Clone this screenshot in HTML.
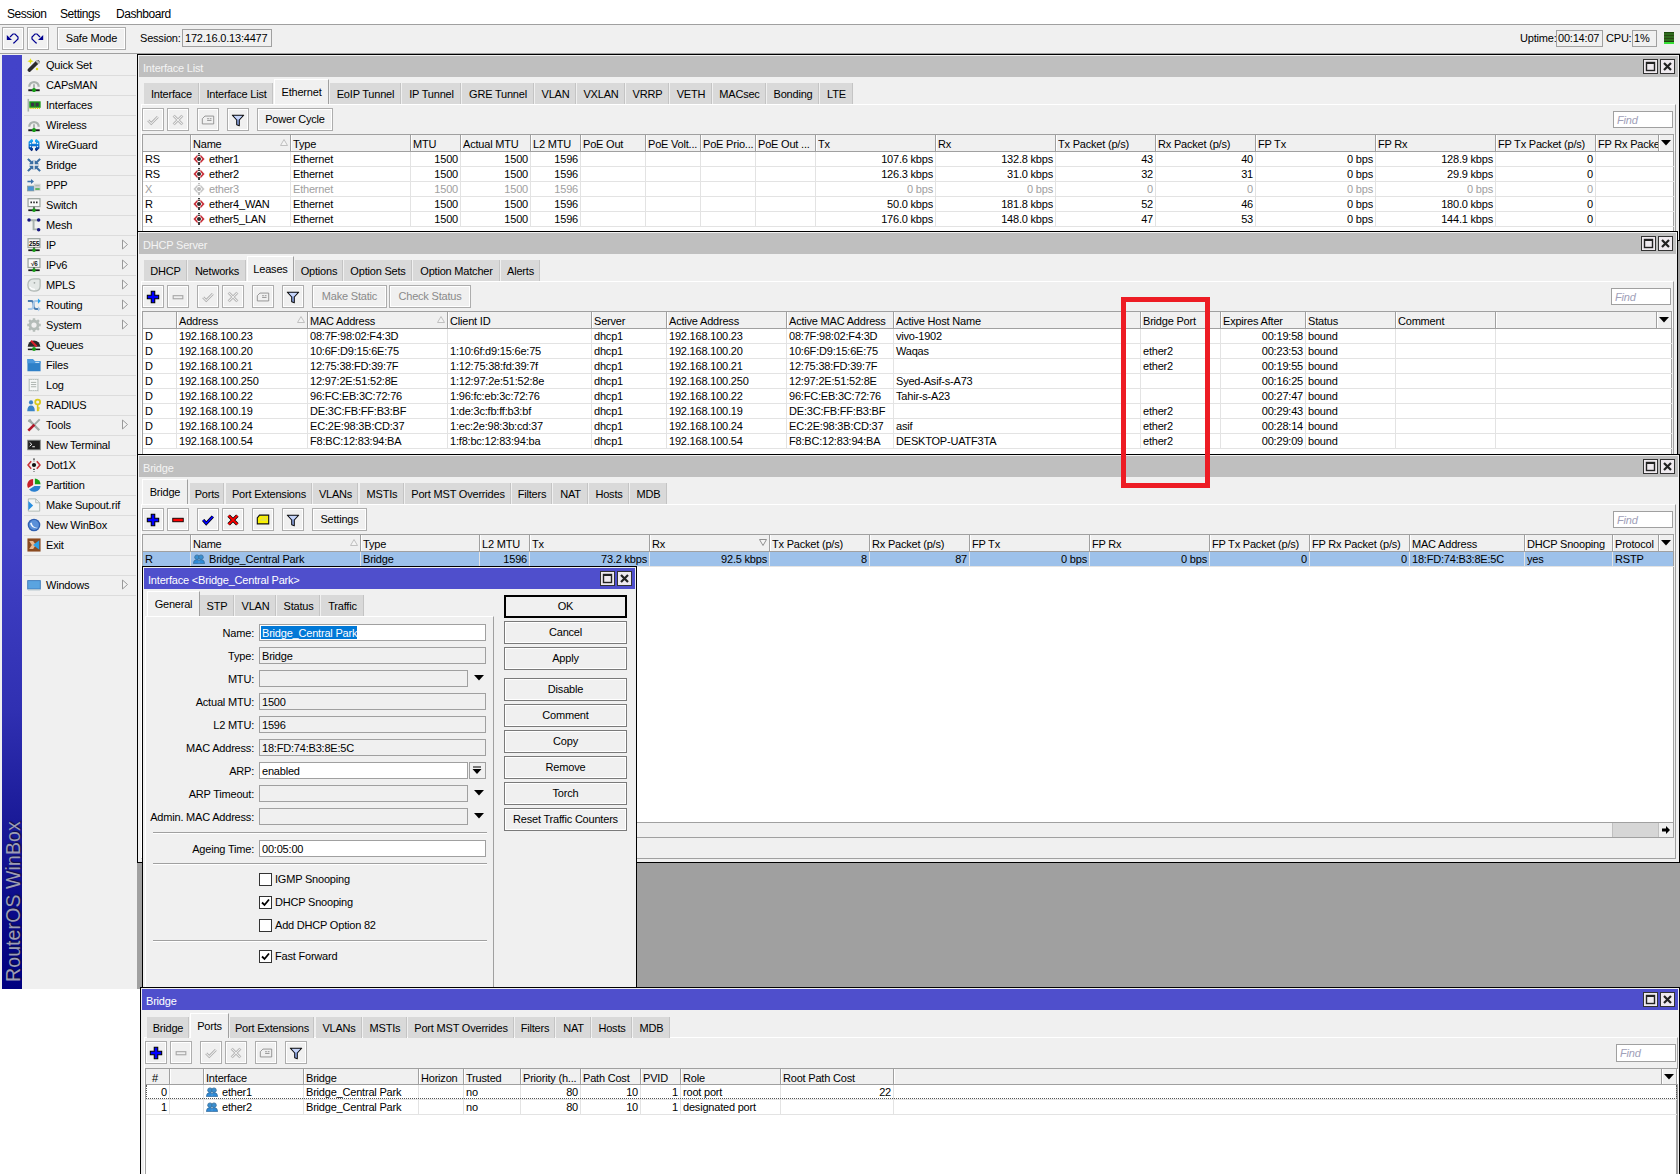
<!DOCTYPE html><html><head><meta charset="utf-8"><style>*{margin:0;padding:0;box-sizing:border-box}
html,body{width:1680px;height:1174px;overflow:hidden}
body{position:relative;background:#fff;font-family:"Liberation Sans",sans-serif;font-size:11px;letter-spacing:-0.2px;color:#000}
body>div{position:absolute}
.t{white-space:nowrap;line-height:15px;height:15px}
</style></head><body><div style="left:0px;top:0px;width:1680px;height:24px;background:#fff;"></div>
<div class="t" style="left:7px;top:7px;font-size:12px;letter-spacing:-0.45px;">Session</div>
<div class="t" style="left:60px;top:7px;font-size:12px;letter-spacing:-0.45px;">Settings</div>
<div class="t" style="left:116px;top:7px;font-size:12px;letter-spacing:-0.45px;">Dashboard</div>
<div style="left:0px;top:24px;width:1680px;height:1px;background:#a0a0a0;"></div>
<div style="left:0px;top:25px;width:1680px;height:28px;background:#f0f0f0;"></div>
<div style="left:2px;top:27px;width:22px;height:23px;border:1px solid #adadad;background:#f0f0f0;border-width:1px;box-shadow:inset 0 0 0 1px #fff;"></div>
<svg style="position:absolute;left:5px;top:30px;" width="16" height="16" viewBox="0 0 16 16"><path d="M1.8 5 L1.8 10 L7 10 Z" fill="#000090"/><path d="M5 7 L8 4 L10 4 L13 7 L13 9 L9 13 L8 13" fill="none" stroke="#000090" stroke-width="1.2"/></svg>
<div style="left:27px;top:27px;width:22px;height:23px;border:1px solid #adadad;background:#f0f0f0;border-width:1px;box-shadow:inset 0 0 0 1px #fff;"></div>
<svg style="position:absolute;left:30px;top:30px;" width="16" height="16" viewBox="0 0 16 16"><path d="M13.2 5 L13.2 10 L8 10 Z" fill="#000090"/><path d="M10 7 L7 4 L5 4 L2 7 L2 9 L6 13 L7 13" fill="none" stroke="#000090" stroke-width="1.2"/></svg>
<div style="left:57px;top:27px;width:69px;height:23px;border:1px solid #adadad;background:#f0f0f0;border-width:1px;box-shadow:inset 0 0 0 1px #fff;"></div>
<div class="t" style="left:57px;width:69px;top:31px;text-align:center;">Safe Mode</div>
<div class="t" style="left:140px;top:31px;">Session:</div>
<div style="left:182px;top:29px;width:90px;height:18px;border:1px solid #a0a0a0;background:#f0f0f0;"></div>
<div class="t" style="left:185px;top:31px;">172.16.0.13:4477</div>
<div class="t" style="left:1520px;top:31px;">Uptime:</div>
<div style="left:1556px;top:30px;width:47px;height:17px;border:1px solid #a0a0a0;background:#f0f0f0;"></div>
<div class="t" style="left:1558px;top:31px;">00:14:07</div>
<div class="t" style="left:1606px;top:31px;">CPU:</div>
<div style="left:1632px;top:30px;width:25px;height:17px;border:1px solid #a0a0a0;background:#f0f0f0;"></div>
<div class="t" style="left:1634px;top:31px;">1%</div>
<div style="left:1664px;top:32px;width:10px;height:12px;background:linear-gradient(#1c4a0c 0 1px,#2f6c1e 1px 3px,#2a4a14 3px 4px,#2f6c1e 4px 6px,#2a4a14 6px 7px,#2f6c1e 7px 9px,#22400e 9px 10px,#36e036 10px 12px);"></div>
<div style="left:0px;top:53px;width:1680px;height:1px;background:#a0a0a0;"></div>
<div style="left:0px;top:54px;width:137px;height:935px;background:#f0f0f0;"></div>
<div style="left:2px;top:55px;width:20px;height:934px;background:linear-gradient(#4343c9 0%,#4141c6 52%,#3030b2 70%,#1a1a98 82%,#0a0a88 92%,#000080 100%);"></div>
<div style="left:-67px;top:892px;width:160px;height:20px;transform:rotate(-90deg);font-size:19.5px;line-height:20px;letter-spacing:0.1px;color:#9c9cb4;white-space:nowrap;text-shadow:1px 1px 1px #101040;">RouterOS WinBox</div>
<div class="t" style="left:46px;top:58px;">Quick Set</div>
<svg style="position:absolute;left:27px;top:58px;" width="14" height="14" viewBox="0 0 16 16"><path d="M2.8 13.8 L12.2 4.4" stroke="#2b2b2b" stroke-width="4.2" stroke-linecap="round"/><path d="M11.3 3.6 L13.3 5.6" stroke="#bdbdbd" stroke-width="2.6" stroke-linecap="round"/><path d="M4 0.3 L5 2.7 L7.6 3.6 L5 4.6 L4 7 L3 4.6 L0.4 3.6 L3 2.7 Z" fill="#e2df14"/><circle cx="11.5" cy="12.6" r="1.4" fill="#e2df14"/></svg>
<div style="left:24px;top:75px;width:112px;height:1px;background:#dcdcdc;"></div>
<div class="t" style="left:46px;top:78px;">CAPsMAN</div>
<svg style="position:absolute;left:27px;top:78px;" width="14" height="14" viewBox="0 0 16 16"><path d="M2.6 10 A5.4 5.4 0 0 1 13.4 10" fill="none" stroke="#aab2ae" stroke-width="2.6"/><path d="M8 7 V13" stroke="#9aa39e" stroke-width="1.8"/><path d="M1.5 14 H14.5" stroke="#1a1a1a" stroke-width="2.2"/><circle cx="8" cy="13.8" r="2.3" fill="#16a016"/></svg>
<div style="left:24px;top:95px;width:112px;height:1px;background:#dcdcdc;"></div>
<div class="t" style="left:46px;top:98px;">Interfaces</div>
<svg style="position:absolute;left:27px;top:98px;" width="14" height="14" viewBox="0 0 16 16"><rect x="0.6" y="1" width="1.8" height="14.5" fill="#a8b4ae"/><rect x="2.6" y="3.8" width="13" height="7.4" fill="#189818"/><rect x="4.6" y="5.4" width="3.6" height="4.2" fill="#3a3446"/><rect x="9.8" y="5.4" width="3.6" height="4.2" fill="#3a3446"/><path d="M3 11.8 H15.5" stroke="#d8d400" stroke-width="1.4" stroke-dasharray="1.2 0.9"/></svg>
<div style="left:24px;top:115px;width:112px;height:1px;background:#dcdcdc;"></div>
<div class="t" style="left:46px;top:118px;">Wireless</div>
<svg style="position:absolute;left:27px;top:118px;" width="14" height="14" viewBox="0 0 16 16"><path d="M2.6 10 A5.4 5.4 0 0 1 13.4 10" fill="none" stroke="#aab2ae" stroke-width="2.6"/><path d="M8 7 V13" stroke="#9aa39e" stroke-width="1.8"/><path d="M1.5 14 H14.5" stroke="#1a1a1a" stroke-width="2.2"/><circle cx="8" cy="13.8" r="2.3" fill="#16a016"/></svg>
<div style="left:24px;top:135px;width:112px;height:1px;background:#dcdcdc;"></div>
<div class="t" style="left:46px;top:138px;">WireGuard</div>
<svg style="position:absolute;left:27px;top:138px;" width="14" height="14" viewBox="0 0 16 16"><defs><linearGradient id="wgg" x1="0" y1="0" x2="0" y2="1"><stop offset="0" stop-color="#22b8ff"/><stop offset="0.55" stop-color="#0a6fd0"/><stop offset="1" stop-color="#001a70"/></linearGradient></defs><path d="M5.2 1 L6.8 2.2 V4.6 H5.8 V6.6 H10.2 V4.6 H9.2 V2.2 L10.8 1 L14.2 4.2 V11.8 L10.8 15 L9.2 13.8 V11.4 H10.2 V9.4 H5.8 V11.4 H6.8 V13.8 L5.2 15 L1.8 11.8 V4.2 Z" fill="url(#wgg)"/><circle cx="4" cy="6.2" r="0.9" fill="#e8f6ff"/><circle cx="12" cy="6.2" r="0.9" fill="#e8f6ff"/><circle cx="4" cy="9.8" r="0.9" fill="#cfe6ff"/><circle cx="12" cy="9.8" r="0.9" fill="#cfe6ff"/></svg>
<div style="left:24px;top:155px;width:112px;height:1px;background:#dcdcdc;"></div>
<div class="t" style="left:46px;top:158px;">Bridge</div>
<svg style="position:absolute;left:27px;top:158px;" width="14" height="14" viewBox="0 0 16 16"><g stroke="#3a6ea2" stroke-width="2.4"><path d="M1 1 L5.8 5.8 M15 1 L10.2 5.8 M1 15 L5.8 10.2 M15 15 L10.2 10.2"/></g><g fill="#3a6ea2"><path d="M7.2 2.2 V7.2 H2.2 Z M8.8 2.2 V7.2 H13.8 Z M7.2 13.8 V8.8 H2.2 Z M8.8 13.8 V8.8 H13.8 Z"/></g></svg>
<div style="left:24px;top:175px;width:112px;height:1px;background:#dcdcdc;"></div>
<div class="t" style="left:46px;top:178px;">PPP</div>
<svg style="position:absolute;left:27px;top:178px;" width="14" height="14" viewBox="0 0 16 16"><path d="M0.5 4 H5.5" stroke="#3a6fa8" stroke-width="1.8"/><path d="M4.6 1.2 L8 4 L4.6 6.8 Z" fill="#3a6fa8"/><rect x="0.5" y="9.2" width="7.5" height="5.6" fill="#4a94d4" stroke="#8a9a96" stroke-width="0.8"/><rect x="8" y="6.6" width="7.5" height="8.2" fill="#d0d4d2"/><path d="M9.5 8.8 H14.5" stroke="#a8aca8" stroke-width="1"/><path d="M9.5 12.6 H14.5" stroke="#16a016" stroke-width="1.4"/></svg>
<div style="left:24px;top:195px;width:112px;height:1px;background:#dcdcdc;"></div>
<div class="t" style="left:46px;top:198px;">Switch</div>
<svg style="position:absolute;left:27px;top:198px;" width="14" height="14" viewBox="0 0 16 16"><rect x="1.2" y="0.8" width="13.6" height="9" fill="#fafafa" stroke="#9aa39e" stroke-width="1.4"/><path d="M4 5 H5.6 M7.2 5 H8.8 M10.4 5 H12" stroke="#111" stroke-width="2"/><path d="M8 10 V13" stroke="#222" stroke-width="1.4"/><path d="M1.5 14 H14.5" stroke="#1a1a1a" stroke-width="2"/><circle cx="8" cy="13.8" r="2.1" fill="#16a016"/></svg>
<div style="left:24px;top:215px;width:112px;height:1px;background:#dcdcdc;"></div>
<div class="t" style="left:46px;top:218px;">Mesh</div>
<svg style="position:absolute;left:27px;top:218px;" width="14" height="14" viewBox="0 0 16 16"><path d="M2.5 2.5 H13 M7.5 2.5 V13 H12.5" stroke="#a8b2ae" stroke-width="2.2" fill="none"/><circle cx="2.3" cy="2.3" r="2" fill="#16167e"/><circle cx="13.3" cy="2.3" r="2" fill="#16167e"/><circle cx="13.3" cy="13.3" r="2" fill="#16167e"/></svg>
<div style="left:24px;top:235px;width:112px;height:1px;background:#dcdcdc;"></div>
<div class="t" style="left:46px;top:238px;">IP</div>
<svg style="position:absolute;left:27px;top:238px;" width="14" height="14" viewBox="0 0 16 16"><rect x="1.2" y="0.8" width="13.6" height="10" fill="#fafafa" stroke="#9aa39e" stroke-width="1.4"/><text x="8" y="8.6" font-size="7.8" font-weight="bold" text-anchor="middle" font-family="Liberation Mono" fill="#111" letter-spacing="-0.6">255</text><path d="M8 10.5 V13" stroke="#222" stroke-width="1.4"/><path d="M1.5 14 H14.5" stroke="#1a1a1a" stroke-width="2"/><circle cx="8" cy="13.8" r="2.1" fill="#16a016"/></svg>
<svg style="position:absolute;left:121px;top:239px;" width="8" height="11" viewBox="0 0 8 11"><path d="M1.5 1 L6.5 5.5 L1.5 10 Z" fill="#f4f4f4" stroke="#9a9a9a" stroke-width="1"/></svg>
<div style="left:24px;top:255px;width:112px;height:1px;background:#dcdcdc;"></div>
<div class="t" style="left:46px;top:258px;">IPv6</div>
<svg style="position:absolute;left:27px;top:258px;" width="14" height="14" viewBox="0 0 16 16"><rect x="1.2" y="0.8" width="13.6" height="10" fill="#fafafa" stroke="#9aa39e" stroke-width="1.4"/><text x="8" y="8.6" font-size="7.4" font-weight="bold" text-anchor="middle" font-family="Liberation Mono" fill="#111" letter-spacing="-0.6">√6</text><path d="M8 10.5 V13" stroke="#222" stroke-width="1.4"/><path d="M1.5 14 H14.5" stroke="#1a1a1a" stroke-width="2"/><circle cx="8" cy="13.8" r="2.1" fill="#16a016"/></svg>
<svg style="position:absolute;left:121px;top:259px;" width="8" height="11" viewBox="0 0 8 11"><path d="M1.5 1 L6.5 5.5 L1.5 10 Z" fill="#f4f4f4" stroke="#9a9a9a" stroke-width="1"/></svg>
<div style="left:24px;top:275px;width:112px;height:1px;background:#dcdcdc;"></div>
<div class="t" style="left:46px;top:278px;">MPLS</div>
<svg style="position:absolute;left:27px;top:278px;" width="14" height="14" viewBox="0 0 16 16"><path d="M8 1 H13.5 Q15 1 15 2.5 V9 Q15 15 8 15 Q1 15 1 8 Q1 1 8 1 Z" fill="#e4e8e6" stroke="#b0b8b4" stroke-width="1.4"/><circle cx="8.5" cy="5.5" r="1" fill="#a0a8a4"/><path d="M3 10 Q5 13 9 13" stroke="#fff" stroke-width="1.4" fill="none"/></svg>
<svg style="position:absolute;left:121px;top:279px;" width="8" height="11" viewBox="0 0 8 11"><path d="M1.5 1 L6.5 5.5 L1.5 10 Z" fill="#f4f4f4" stroke="#9a9a9a" stroke-width="1"/></svg>
<div style="left:24px;top:295px;width:112px;height:1px;background:#dcdcdc;"></div>
<div class="t" style="left:46px;top:298px;">Routing</div>
<svg style="position:absolute;left:27px;top:298px;" width="14" height="14" viewBox="0 0 16 16"><path d="M1 3.5 H5 Q7.5 3.5 7.5 8 Q7.5 12.5 10 12.5 H13" stroke="#4a7cb0" stroke-width="2.2" fill="none"/><path d="M1 12.5 H5 Q7.5 12.5 7.5 8 Q7.5 3.5 10 3.5 H13" stroke="#a8c8e8" stroke-width="2.2" fill="none"/><path d="M12.5 0.5 L15.8 3.5 L12.5 6.5 Z" fill="#2aa0e8"/><path d="M12.5 9.5 L15.8 12.5 L12.5 15.5 Z" fill="#a8c8e8"/></svg>
<svg style="position:absolute;left:121px;top:299px;" width="8" height="11" viewBox="0 0 8 11"><path d="M1.5 1 L6.5 5.5 L1.5 10 Z" fill="#f4f4f4" stroke="#9a9a9a" stroke-width="1"/></svg>
<div style="left:24px;top:315px;width:112px;height:1px;background:#dcdcdc;"></div>
<div class="t" style="left:46px;top:318px;">System</div>
<svg style="position:absolute;left:27px;top:318px;" width="14" height="14" viewBox="0 0 16 16"><circle cx="8" cy="8" r="4.6" fill="none" stroke="#b4bcb8" stroke-width="3.2"/><g stroke="#b4bcb8" stroke-width="2.8"><path d="M8 0.3 V3.5 M8 12.5 V15.7 M0.3 8 H3.5 M12.5 8 H15.7 M2.4 2.4 L4.6 4.6 M11.4 11.4 L13.6 13.6 M13.6 2.4 L11.4 4.6 M4.6 11.4 L2.4 13.6"/></g></svg>
<svg style="position:absolute;left:121px;top:319px;" width="8" height="11" viewBox="0 0 8 11"><path d="M1.5 1 L6.5 5.5 L1.5 10 Z" fill="#f4f4f4" stroke="#9a9a9a" stroke-width="1"/></svg>
<div style="left:24px;top:335px;width:112px;height:1px;background:#dcdcdc;"></div>
<div class="t" style="left:46px;top:338px;">Queues</div>
<svg style="position:absolute;left:27px;top:338px;" width="14" height="14" viewBox="0 0 16 16"><path d="M0.8 10 A7.2 7.2 0 0 1 15.2 10 Z" fill="#2a2a2a"/><path d="M4.6 3.2 L11 9.6" stroke="#d8202a" stroke-width="2.4"/><path d="M1 13 H15" stroke="#1a1a1a" stroke-width="1.8"/><circle cx="8" cy="12.6" r="2.2" fill="#16a016"/></svg>
<div style="left:24px;top:355px;width:112px;height:1px;background:#dcdcdc;"></div>
<div class="t" style="left:46px;top:358px;">Files</div>
<svg style="position:absolute;left:27px;top:358px;" width="14" height="14" viewBox="0 0 16 16"><path d="M0.5 1 H6.5 L9 3.8 H15.5 V15.2 H0.5 Z" fill="#2f80c8"/><path d="M0.5 1 H6.5 L9 3.8 H15.5 V6 H0.5 Z" fill="#4a98dc"/><path d="M9.5 5 H14" stroke="#e8f0f8" stroke-width="1"/></svg>
<div style="left:24px;top:375px;width:112px;height:1px;background:#dcdcdc;"></div>
<div class="t" style="left:46px;top:378px;">Log</div>
<svg style="position:absolute;left:27px;top:378px;" width="14" height="14" viewBox="0 0 16 16"><path d="M2.5 1 L3.5 2 L4.5 1 L5.5 2 L6.5 1 L7.5 2 L8.5 1 L9.5 2 L10.5 1 L11.5 2 L12.5 1 V15 L11.5 14 L10.5 15 L9.5 14 L8.5 15 L7.5 14 L6.5 15 L5.5 14 L4.5 15 L3.5 14 L2.5 15 Z" fill="#f6f8f7" stroke="#a8b2ae" stroke-width="1"/><path d="M4.5 5 H10.5 M4.5 7.5 H10.5 M4.5 10 H10.5" stroke="#a0a8a4" stroke-width="1"/></svg>
<div style="left:24px;top:395px;width:112px;height:1px;background:#dcdcdc;"></div>
<div class="t" style="left:46px;top:398px;">RADIUS</div>
<svg style="position:absolute;left:27px;top:398px;" width="14" height="14" viewBox="0 0 16 16"><circle cx="4.6" cy="5" r="2.4" fill="#3a84c8"/><path d="M0.3 15 Q0.3 8.6 4.6 8.6 Q8.9 8.6 8.9 15 Z" fill="#3a84c8"/><circle cx="12.2" cy="4.6" r="2.8" fill="none" stroke="#d8c818" stroke-width="2"/><path d="M12.2 7.2 V15 M12.2 11.5 H14.5 M12.2 13.8 H14" stroke="#d8c818" stroke-width="1.8"/></svg>
<div style="left:24px;top:415px;width:112px;height:1px;background:#dcdcdc;"></div>
<div class="t" style="left:46px;top:418px;">Tools</div>
<svg style="position:absolute;left:27px;top:418px;" width="14" height="14" viewBox="0 0 16 16"><path d="M3 3 L14 14" stroke="#a0aaa6" stroke-width="2.6"/><path d="M1 4 A3 3 0 0 1 4 1 L5 3 L3 5 Z" fill="#a0aaa6"/><path d="M14.5 1.5 L8.5 7.5" stroke="#a0aaa6" stroke-width="2.2"/><path d="M8.5 7.5 L1.5 14.5" stroke="#b01828" stroke-width="3"/></svg>
<svg style="position:absolute;left:121px;top:419px;" width="8" height="11" viewBox="0 0 8 11"><path d="M1.5 1 L6.5 5.5 L1.5 10 Z" fill="#f4f4f4" stroke="#9a9a9a" stroke-width="1"/></svg>
<div style="left:24px;top:435px;width:112px;height:1px;background:#dcdcdc;"></div>
<div class="t" style="left:46px;top:438px;">New Terminal</div>
<svg style="position:absolute;left:27px;top:438px;" width="14" height="14" viewBox="0 0 16 16"><rect x="0.8" y="2.5" width="14.4" height="11" fill="#202020" stroke="#8a8e8c" stroke-width="1"/><path d="M3 5 L5.5 7.2 L3 9.4" stroke="#fff" stroke-width="1.1" fill="none"/><path d="M6 10 H9" stroke="#fff" stroke-width="1.1"/></svg>
<div style="left:24px;top:455px;width:112px;height:1px;background:#dcdcdc;"></div>
<div class="t" style="left:46px;top:458px;">Dot1X</div>
<svg style="position:absolute;left:27px;top:458px;" width="14" height="14" viewBox="0 0 16 16"><path d="M4.8 3.6 L1.2 8 L4.8 12.4" fill="none" stroke="#c8333a" stroke-width="1.8"/><path d="M11.2 3.6 L14.8 8 L11.2 12.4" fill="none" stroke="#c8333a" stroke-width="1.8"/><circle cx="8" cy="8" r="2.4" fill="#111"/><path d="M8 0.5 V3.8 M8 12.2 V15.5" stroke="#111" stroke-width="1.6" stroke-dasharray="1.6 1"/></svg>
<div style="left:24px;top:475px;width:112px;height:1px;background:#dcdcdc;"></div>
<div class="t" style="left:46px;top:478px;">Partition</div>
<svg style="position:absolute;left:27px;top:478px;" width="14" height="14" viewBox="0 0 16 16"><path d="M7 8 L7 1 A7 7 0 0 0 1.2 11.5 Z" fill="#c8202a"/><path d="M9 7 L9 0.5 A6.8 6.8 0 0 1 15.5 7 Z" fill="#16a016"/><path d="M15.5 9 A7.4 7.4 0 0 1 2.4 13 L8.5 9 Z" fill="#2a80d0"/></svg>
<div style="left:24px;top:495px;width:112px;height:1px;background:#dcdcdc;"></div>
<div class="t" style="left:46px;top:498px;">Make Supout.rif</div>
<svg style="position:absolute;left:27px;top:498px;" width="14" height="14" viewBox="0 0 16 16"><path d="M1.5 1 H10 L14.5 5.5 V15 H1.5 Z" fill="#f4f6f5" stroke="#a8b2ae" stroke-width="1"/><path d="M10 1 V5.5 H14.5" fill="none" stroke="#a8b2ae" stroke-width="1"/><path d="M1.5 3.5 L7 8.5 L1.5 14 Z" fill="#2a90e0"/></svg>
<div style="left:24px;top:515px;width:112px;height:1px;background:#dcdcdc;"></div>
<div class="t" style="left:46px;top:518px;">New WinBox</div>
<svg style="position:absolute;left:27px;top:518px;" width="14" height="14" viewBox="0 0 16 16"><circle cx="8" cy="8" r="7.2" fill="#3060b0"/><circle cx="8" cy="8" r="5.6" fill="#5a90d8"/><path d="M3.5 6 Q5 12.5 12.5 11.5 Q6.5 11 5.2 5.2 Z" fill="#f0f6ff"/></svg>
<div style="left:24px;top:535px;width:112px;height:1px;background:#dcdcdc;"></div>
<div class="t" style="left:46px;top:538px;">Exit</div>
<svg style="position:absolute;left:27px;top:538px;" width="14" height="14" viewBox="0 0 16 16"><rect x="0.5" y="0.5" width="15" height="15" fill="#8a4a20"/><path d="M2.5 3.5 H7 L10 8 L7 12.5 H2.5 L5.5 8 Z" fill="#e8b890"/><path d="M14 2.5 L7 8 L14 13.5 Z" fill="#2aa0e8"/></svg>
<div style="left:24px;top:555px;width:112px;height:1px;background:#dcdcdc;"></div>
<div style="left:24px;top:575px;width:112px;height:1px;background:#dcdcdc;"></div>
<div class="t" style="left:46px;top:578px;">Windows</div>
<svg style="position:absolute;left:27px;top:578px;" width="14" height="14" viewBox="0 0 16 16"><rect x="0.8" y="3" width="14.4" height="9.6" fill="#5aa4e0" stroke="#3a78b8" stroke-width="1"/><path d="M1 13.6 H15" stroke="#b8c8d0" stroke-width="1.4"/></svg>
<svg style="position:absolute;left:121px;top:579px;" width="8" height="11" viewBox="0 0 8 11"><path d="M1.5 1 L6.5 5.5 L1.5 10 Z" fill="#f4f4f4" stroke="#9a9a9a" stroke-width="1"/></svg>
<div style="left:24px;top:595px;width:112px;height:1px;background:#dcdcdc;"></div>
<div style="left:137px;top:54px;width:1543px;height:935px;background:#a0a0a0;"></div>
<div style="left:0px;top:989px;width:1680px;height:185px;background:#fff;"></div>
<div style="left:137px;top:54px;width:1543px;height:187px;background:#000;"></div>
<div style="left:138px;top:55px;width:1541px;height:185px;background:#f0f0f0;"></div>
<div style="left:139px;top:56px;width:1539px;height:21px;background:#bfbfbf;"></div>
<div class="t" style="left:143px;top:61px;color:#f4f4f4;">Interface List</div>
<div style="left:1643px;top:59px;width:15px;height:15px;border:1px solid #333;background:#efeaef;"></div>
<svg style="position:absolute;left:1644px;top:60px;" width="13" height="13" viewBox="0 0 13 13"><rect x="2.5" y="2.5" width="8" height="8" fill="none" stroke="#222" stroke-width="1.4"/><rect x="2" y="2" width="9" height="2" fill="#222"/></svg>
<div style="left:1660px;top:59px;width:15px;height:15px;border:1px solid #333;background:#efeaef;"></div>
<svg style="position:absolute;left:1661px;top:60px;" width="13" height="13" viewBox="0 0 13 13"><path d="M3 3 L10 10 M10 3 L3 10" stroke="#222" stroke-width="2.2"/></svg>
<div style="left:141px;top:104px;width:1535px;height:137px;background:#f0f0f0;border-top:1px solid #fff;border-left:1px solid #fff;border-right:1px solid #a0a0a0;border-bottom:1px solid #a0a0a0;"></div>
<div style="left:144px;top:83px;width:55px;height:21px;background:#d9d9d9;border-right:1px solid #c4c4c4;"></div>
<div class="t" style="left:144px;width:55px;top:87px;text-align:center;">Interface</div>
<div style="left:200px;top:83px;width:73px;height:21px;background:#d9d9d9;border-right:1px solid #c4c4c4;"></div>
<div class="t" style="left:200px;width:73px;top:87px;text-align:center;">Interface List</div>
<div style="left:274px;top:79px;width:55px;height:25px;background:#f0f0f0;border-left:1px solid #fff;border-top:1px solid #fff;border-right:1px solid #a0a0a0;"></div>
<div class="t" style="left:274px;width:55px;top:85px;text-align:center;">Ethernet</div>
<div style="left:330px;top:83px;width:71px;height:21px;background:#d9d9d9;border-right:1px solid #c4c4c4;"></div>
<div class="t" style="left:330px;width:71px;top:87px;text-align:center;">EoIP Tunnel</div>
<div style="left:402px;top:83px;width:59px;height:21px;background:#d9d9d9;border-right:1px solid #c4c4c4;"></div>
<div class="t" style="left:402px;width:59px;top:87px;text-align:center;">IP Tunnel</div>
<div style="left:462px;top:83px;width:72px;height:21px;background:#d9d9d9;border-right:1px solid #c4c4c4;"></div>
<div class="t" style="left:462px;width:72px;top:87px;text-align:center;">GRE Tunnel</div>
<div style="left:535px;top:83px;width:41px;height:21px;background:#d9d9d9;border-right:1px solid #c4c4c4;"></div>
<div class="t" style="left:535px;width:41px;top:87px;text-align:center;">VLAN</div>
<div style="left:577px;top:83px;width:48px;height:21px;background:#d9d9d9;border-right:1px solid #c4c4c4;"></div>
<div class="t" style="left:577px;width:48px;top:87px;text-align:center;">VXLAN</div>
<div style="left:626px;top:83px;width:43px;height:21px;background:#d9d9d9;border-right:1px solid #c4c4c4;"></div>
<div class="t" style="left:626px;width:43px;top:87px;text-align:center;">VRRP</div>
<div style="left:670px;top:83px;width:42px;height:21px;background:#d9d9d9;border-right:1px solid #c4c4c4;"></div>
<div class="t" style="left:670px;width:42px;top:87px;text-align:center;">VETH</div>
<div style="left:713px;top:83px;width:53px;height:21px;background:#d9d9d9;border-right:1px solid #c4c4c4;"></div>
<div class="t" style="left:713px;width:53px;top:87px;text-align:center;">MACsec</div>
<div style="left:767px;top:83px;width:52px;height:21px;background:#d9d9d9;border-right:1px solid #c4c4c4;"></div>
<div class="t" style="left:767px;width:52px;top:87px;text-align:center;">Bonding</div>
<div style="left:820px;top:83px;width:33px;height:21px;background:#d9d9d9;border-right:1px solid #c4c4c4;"></div>
<div class="t" style="left:820px;width:33px;top:87px;text-align:center;">LTE</div>
<div style="left:142px;top:108px;width:22px;height:23px;border:1px solid #adadad;background:#f0f0f0;box-shadow:inset 0 0 0 1px #fff;"></div>
<svg style="position:absolute;left:146px;top:113px;" width="14" height="14" viewBox="0 0 16 16"><path d="M2.5 8.5 L6 12 L13.5 4.5" fill="none" stroke="#a8a8a8" stroke-width="3"/><path d="M2.5 8.5 L6 12 L13.5 4.5" fill="none" stroke="#f0f0f0" stroke-width="1.2"/></svg>
<div style="left:167px;top:108px;width:22px;height:23px;border:1px solid #adadad;background:#f0f0f0;box-shadow:inset 0 0 0 1px #fff;"></div>
<svg style="position:absolute;left:171px;top:113px;" width="14" height="14" viewBox="0 0 16 16"><path d="M3 3 L13 13 M13 3 L3 13" fill="none" stroke="#a8a8a8" stroke-width="3.2"/><path d="M3 3 L13 13 M13 3 L3 13" fill="none" stroke="#f0f0f0" stroke-width="1.4"/></svg>
<div style="left:197px;top:108px;width:22px;height:23px;border:1px solid #adadad;background:#f0f0f0;box-shadow:inset 0 0 0 1px #fff;"></div>
<svg style="position:absolute;left:201px;top:113px;" width="14" height="14" viewBox="0 0 16 16"><path d="M1.5 6.5 L4.5 3.5 L14.5 3.5 L14.5 12.5 L1.5 12.5 Z" fill="#f0f0f0" stroke="#8a8a8a" stroke-width="1"/><path d="M7 6.5 H9 M10 6.5 H12 M7 8.5 H12" stroke="#8a8a8a" stroke-width="1"/></svg>
<div style="left:227px;top:108px;width:22px;height:23px;border:1px solid #adadad;background:#f0f0f0;box-shadow:inset 0 0 0 1px #fff;"></div>
<svg style="position:absolute;left:231px;top:113px;" width="14" height="14" viewBox="0 0 16 16"><path d="M1.5 2.5 H14.5 L9.5 8 V14.5 L6.5 13.5 V8 Z" fill="#8fa8e8" stroke="#111" stroke-width="1.2" stroke-linejoin="round"/><path d="M3.5 3.5 H12.5 L9 7 H7 Z" fill="#c8d6f8"/></svg>
<div style="left:257px;top:108px;width:76px;height:23px;border:1px solid #adadad;background:#f0f0f0;box-shadow:inset 0 0 0 1px #fff;"></div>
<div class="t" style="left:257px;width:76px;top:112px;text-align:center;">Power Cycle</div>
<div style="left:1613px;top:111px;width:60px;height:17px;border:1px solid #a0a0a0;background:#fff;"></div>
<div class="t" style="left:1617px;top:113px;color:#a0a0b8;font-style:italic;">Find</div>
<div style="left:142px;top:134px;width:1532px;height:107px;background:#fff;border-left:1px solid #a0a0a0;border-top:1px solid #a0a0a0;"></div>
<div style="left:143px;top:135px;width:1531px;height:16px;background:#f0f0f0;"></div>
<div style="left:142px;top:151px;width:1532px;height:1px;background:#a0a0a0;"></div>
<div style="left:190px;top:135px;width:1px;height:16px;background:#a0a0a0;"></div>
<div style="left:191px;top:135px;width:1px;height:16px;background:#fff;"></div>
<div style="left:290px;top:135px;width:1px;height:16px;background:#a0a0a0;"></div>
<div style="left:291px;top:135px;width:1px;height:16px;background:#fff;"></div>
<div style="left:410px;top:135px;width:1px;height:16px;background:#a0a0a0;"></div>
<div style="left:411px;top:135px;width:1px;height:16px;background:#fff;"></div>
<div style="left:460px;top:135px;width:1px;height:16px;background:#a0a0a0;"></div>
<div style="left:461px;top:135px;width:1px;height:16px;background:#fff;"></div>
<div style="left:530px;top:135px;width:1px;height:16px;background:#a0a0a0;"></div>
<div style="left:531px;top:135px;width:1px;height:16px;background:#fff;"></div>
<div style="left:580px;top:135px;width:1px;height:16px;background:#a0a0a0;"></div>
<div style="left:581px;top:135px;width:1px;height:16px;background:#fff;"></div>
<div style="left:645px;top:135px;width:1px;height:16px;background:#a0a0a0;"></div>
<div style="left:646px;top:135px;width:1px;height:16px;background:#fff;"></div>
<div style="left:700px;top:135px;width:1px;height:16px;background:#a0a0a0;"></div>
<div style="left:701px;top:135px;width:1px;height:16px;background:#fff;"></div>
<div style="left:755px;top:135px;width:1px;height:16px;background:#a0a0a0;"></div>
<div style="left:756px;top:135px;width:1px;height:16px;background:#fff;"></div>
<div style="left:815px;top:135px;width:1px;height:16px;background:#a0a0a0;"></div>
<div style="left:816px;top:135px;width:1px;height:16px;background:#fff;"></div>
<div style="left:935px;top:135px;width:1px;height:16px;background:#a0a0a0;"></div>
<div style="left:936px;top:135px;width:1px;height:16px;background:#fff;"></div>
<div style="left:1055px;top:135px;width:1px;height:16px;background:#a0a0a0;"></div>
<div style="left:1056px;top:135px;width:1px;height:16px;background:#fff;"></div>
<div style="left:1155px;top:135px;width:1px;height:16px;background:#a0a0a0;"></div>
<div style="left:1156px;top:135px;width:1px;height:16px;background:#fff;"></div>
<div style="left:1255px;top:135px;width:1px;height:16px;background:#a0a0a0;"></div>
<div style="left:1256px;top:135px;width:1px;height:16px;background:#fff;"></div>
<div style="left:1375px;top:135px;width:1px;height:16px;background:#a0a0a0;"></div>
<div style="left:1376px;top:135px;width:1px;height:16px;background:#fff;"></div>
<div style="left:1495px;top:135px;width:1px;height:16px;background:#a0a0a0;"></div>
<div style="left:1496px;top:135px;width:1px;height:16px;background:#fff;"></div>
<div style="left:1595px;top:135px;width:1px;height:16px;background:#a0a0a0;"></div>
<div style="left:1596px;top:135px;width:1px;height:16px;background:#fff;"></div>
<div style="left:1658px;top:135px;width:1px;height:16px;background:#a0a0a0;"></div>
<div style="left:1659px;top:135px;width:1px;height:16px;background:#fff;"></div>
<div style="left:1673px;top:135px;width:1px;height:16px;background:#a0a0a0;"></div>
<div style="left:1674px;top:135px;width:1px;height:16px;background:#fff;"></div>
<div style="left:1673px;top:134px;width:1px;height:107px;background:#a0a0a0;"></div>
<svg style="position:absolute;left:1661px;top:140px;" width="10" height="6" viewBox="0 0 10 6"><path d="M0 0 H10 L5 5.5 Z" fill="#000"/></svg>
<div class="t" style="left:193px;top:137px;width:97px;overflow:hidden;">Name</div>
<div class="t" style="left:293px;top:137px;width:117px;overflow:hidden;">Type</div>
<div class="t" style="left:413px;top:137px;width:47px;overflow:hidden;">MTU</div>
<div class="t" style="left:463px;top:137px;width:67px;overflow:hidden;">Actual MTU</div>
<div class="t" style="left:533px;top:137px;width:47px;overflow:hidden;">L2 MTU</div>
<div class="t" style="left:583px;top:137px;width:62px;overflow:hidden;">PoE Out</div>
<div class="t" style="left:648px;top:137px;width:52px;overflow:hidden;">PoE Volt...</div>
<div class="t" style="left:703px;top:137px;width:52px;overflow:hidden;">PoE Prio...</div>
<div class="t" style="left:758px;top:137px;width:57px;overflow:hidden;">PoE Out ...</div>
<div class="t" style="left:818px;top:137px;width:117px;overflow:hidden;">Tx</div>
<div class="t" style="left:938px;top:137px;width:117px;overflow:hidden;">Rx</div>
<div class="t" style="left:1058px;top:137px;width:97px;overflow:hidden;">Tx Packet (p/s)</div>
<div class="t" style="left:1158px;top:137px;width:97px;overflow:hidden;">Rx Packet (p/s)</div>
<div class="t" style="left:1258px;top:137px;width:117px;overflow:hidden;">FP Tx</div>
<div class="t" style="left:1378px;top:137px;width:117px;overflow:hidden;">FP Rx</div>
<div class="t" style="left:1498px;top:137px;width:97px;overflow:hidden;">FP Tx Packet (p/s)</div>
<div class="t" style="left:1598px;top:137px;width:60px;overflow:hidden;">FP Rx Packet (p/s)</div>
<svg style="position:absolute;left:280px;top:139px;" width="8" height="7" viewBox="0 0 8 7"><path d="M4 0.5 L7.5 6.5 H0.5 Z" fill="#f4f4f4" stroke="#c0c0c0" stroke-width="1"/></svg>
<div style="left:143px;top:166px;width:1531px;height:1px;background:#e3e3e3;"></div>
<div style="left:190px;top:152px;width:1px;height:15px;background:#e3e3e3;"></div>
<div style="left:290px;top:152px;width:1px;height:15px;background:#e3e3e3;"></div>
<div style="left:410px;top:152px;width:1px;height:15px;background:#e3e3e3;"></div>
<div style="left:460px;top:152px;width:1px;height:15px;background:#e3e3e3;"></div>
<div style="left:530px;top:152px;width:1px;height:15px;background:#e3e3e3;"></div>
<div style="left:580px;top:152px;width:1px;height:15px;background:#e3e3e3;"></div>
<div style="left:645px;top:152px;width:1px;height:15px;background:#e3e3e3;"></div>
<div style="left:700px;top:152px;width:1px;height:15px;background:#e3e3e3;"></div>
<div style="left:755px;top:152px;width:1px;height:15px;background:#e3e3e3;"></div>
<div style="left:815px;top:152px;width:1px;height:15px;background:#e3e3e3;"></div>
<div style="left:935px;top:152px;width:1px;height:15px;background:#e3e3e3;"></div>
<div style="left:1055px;top:152px;width:1px;height:15px;background:#e3e3e3;"></div>
<div style="left:1155px;top:152px;width:1px;height:15px;background:#e3e3e3;"></div>
<div style="left:1255px;top:152px;width:1px;height:15px;background:#e3e3e3;"></div>
<div style="left:1375px;top:152px;width:1px;height:15px;background:#e3e3e3;"></div>
<div style="left:1495px;top:152px;width:1px;height:15px;background:#e3e3e3;"></div>
<div style="left:1595px;top:152px;width:1px;height:15px;background:#e3e3e3;"></div>
<div class="t" style="left:145px;top:152px;">RS</div>
<svg style="position:absolute;left:193px;top:153px;" width="12" height="12" viewBox="0 0 12 12"><path d="M4.6 1.4 L0.4 6 L4.6 10.6 L4.6 8.2 L2.8 6 L4.6 3.8 Z" fill="#c8323c"/><path d="M7.4 1.4 L11.6 6 L7.4 10.6 L7.4 8.2 L9.2 6 L7.4 3.8 Z" fill="#c8323c"/><circle cx="6" cy="6" r="2" fill="#2a2a2a"/><rect x="5.1" y="0" width="1.8" height="1.2" fill="#2a2a2a"/><rect x="5.1" y="1.8" width="1.8" height="1.2" fill="#2a2a2a"/><rect x="5.1" y="9" width="1.8" height="3" fill="#2a2a2a"/></svg>
<div class="t" style="left:209px;top:152px;">ether1</div>
<div class="t" style="left:293px;top:152px;">Ethernet</div>
<div class="t" style="right:1222px;top:152px;text-align:right;">1500</div>
<div class="t" style="right:1152px;top:152px;text-align:right;">1500</div>
<div class="t" style="right:1102px;top:152px;text-align:right;">1596</div>
<div class="t" style="right:747px;top:152px;text-align:right;">107.6 kbps</div>
<div class="t" style="right:627px;top:152px;text-align:right;">132.8 kbps</div>
<div class="t" style="right:527px;top:152px;text-align:right;">43</div>
<div class="t" style="right:427px;top:152px;text-align:right;">40</div>
<div class="t" style="right:307px;top:152px;text-align:right;">0 bps</div>
<div class="t" style="right:187px;top:152px;text-align:right;">128.9 kbps</div>
<div class="t" style="right:87px;top:152px;text-align:right;">0</div>
<div style="left:143px;top:181px;width:1531px;height:1px;background:#e3e3e3;"></div>
<div style="left:190px;top:167px;width:1px;height:15px;background:#e3e3e3;"></div>
<div style="left:290px;top:167px;width:1px;height:15px;background:#e3e3e3;"></div>
<div style="left:410px;top:167px;width:1px;height:15px;background:#e3e3e3;"></div>
<div style="left:460px;top:167px;width:1px;height:15px;background:#e3e3e3;"></div>
<div style="left:530px;top:167px;width:1px;height:15px;background:#e3e3e3;"></div>
<div style="left:580px;top:167px;width:1px;height:15px;background:#e3e3e3;"></div>
<div style="left:645px;top:167px;width:1px;height:15px;background:#e3e3e3;"></div>
<div style="left:700px;top:167px;width:1px;height:15px;background:#e3e3e3;"></div>
<div style="left:755px;top:167px;width:1px;height:15px;background:#e3e3e3;"></div>
<div style="left:815px;top:167px;width:1px;height:15px;background:#e3e3e3;"></div>
<div style="left:935px;top:167px;width:1px;height:15px;background:#e3e3e3;"></div>
<div style="left:1055px;top:167px;width:1px;height:15px;background:#e3e3e3;"></div>
<div style="left:1155px;top:167px;width:1px;height:15px;background:#e3e3e3;"></div>
<div style="left:1255px;top:167px;width:1px;height:15px;background:#e3e3e3;"></div>
<div style="left:1375px;top:167px;width:1px;height:15px;background:#e3e3e3;"></div>
<div style="left:1495px;top:167px;width:1px;height:15px;background:#e3e3e3;"></div>
<div style="left:1595px;top:167px;width:1px;height:15px;background:#e3e3e3;"></div>
<div class="t" style="left:145px;top:167px;">RS</div>
<svg style="position:absolute;left:193px;top:168px;" width="12" height="12" viewBox="0 0 12 12"><path d="M4.6 1.4 L0.4 6 L4.6 10.6 L4.6 8.2 L2.8 6 L4.6 3.8 Z" fill="#c8323c"/><path d="M7.4 1.4 L11.6 6 L7.4 10.6 L7.4 8.2 L9.2 6 L7.4 3.8 Z" fill="#c8323c"/><circle cx="6" cy="6" r="2" fill="#2a2a2a"/><rect x="5.1" y="0" width="1.8" height="1.2" fill="#2a2a2a"/><rect x="5.1" y="1.8" width="1.8" height="1.2" fill="#2a2a2a"/><rect x="5.1" y="9" width="1.8" height="3" fill="#2a2a2a"/></svg>
<div class="t" style="left:209px;top:167px;">ether2</div>
<div class="t" style="left:293px;top:167px;">Ethernet</div>
<div class="t" style="right:1222px;top:167px;text-align:right;">1500</div>
<div class="t" style="right:1152px;top:167px;text-align:right;">1500</div>
<div class="t" style="right:1102px;top:167px;text-align:right;">1596</div>
<div class="t" style="right:747px;top:167px;text-align:right;">126.3 kbps</div>
<div class="t" style="right:627px;top:167px;text-align:right;">31.0 kbps</div>
<div class="t" style="right:527px;top:167px;text-align:right;">32</div>
<div class="t" style="right:427px;top:167px;text-align:right;">31</div>
<div class="t" style="right:307px;top:167px;text-align:right;">0 bps</div>
<div class="t" style="right:187px;top:167px;text-align:right;">29.9 kbps</div>
<div class="t" style="right:87px;top:167px;text-align:right;">0</div>
<div style="left:143px;top:196px;width:1531px;height:1px;background:#e3e3e3;"></div>
<div style="left:190px;top:182px;width:1px;height:15px;background:#e3e3e3;"></div>
<div style="left:290px;top:182px;width:1px;height:15px;background:#e3e3e3;"></div>
<div style="left:410px;top:182px;width:1px;height:15px;background:#e3e3e3;"></div>
<div style="left:460px;top:182px;width:1px;height:15px;background:#e3e3e3;"></div>
<div style="left:530px;top:182px;width:1px;height:15px;background:#e3e3e3;"></div>
<div style="left:580px;top:182px;width:1px;height:15px;background:#e3e3e3;"></div>
<div style="left:645px;top:182px;width:1px;height:15px;background:#e3e3e3;"></div>
<div style="left:700px;top:182px;width:1px;height:15px;background:#e3e3e3;"></div>
<div style="left:755px;top:182px;width:1px;height:15px;background:#e3e3e3;"></div>
<div style="left:815px;top:182px;width:1px;height:15px;background:#e3e3e3;"></div>
<div style="left:935px;top:182px;width:1px;height:15px;background:#e3e3e3;"></div>
<div style="left:1055px;top:182px;width:1px;height:15px;background:#e3e3e3;"></div>
<div style="left:1155px;top:182px;width:1px;height:15px;background:#e3e3e3;"></div>
<div style="left:1255px;top:182px;width:1px;height:15px;background:#e3e3e3;"></div>
<div style="left:1375px;top:182px;width:1px;height:15px;background:#e3e3e3;"></div>
<div style="left:1495px;top:182px;width:1px;height:15px;background:#e3e3e3;"></div>
<div style="left:1595px;top:182px;width:1px;height:15px;background:#e3e3e3;"></div>
<div class="t" style="left:145px;top:182px;color:#a0a0a0;">X</div>
<svg style="position:absolute;left:193px;top:183px;" width="12" height="12" viewBox="0 0 12 12"><path d="M4.6 1.4 L0.4 6 L4.6 10.6 L4.6 8.2 L2.8 6 L4.6 3.8 Z" fill="#c8c8c8"/><path d="M7.4 1.4 L11.6 6 L7.4 10.6 L7.4 8.2 L9.2 6 L7.4 3.8 Z" fill="#c8c8c8"/><circle cx="6" cy="6" r="2" fill="#b8b8b8"/><rect x="5.1" y="0" width="1.8" height="1.2" fill="#b8b8b8"/><rect x="5.1" y="1.8" width="1.8" height="1.2" fill="#b8b8b8"/><rect x="5.1" y="9" width="1.8" height="3" fill="#b8b8b8"/></svg>
<div class="t" style="left:209px;top:182px;color:#a0a0a0;">ether3</div>
<div class="t" style="left:293px;top:182px;color:#a0a0a0;">Ethernet</div>
<div class="t" style="right:1222px;top:182px;text-align:right;color:#a0a0a0;">1500</div>
<div class="t" style="right:1152px;top:182px;text-align:right;color:#a0a0a0;">1500</div>
<div class="t" style="right:1102px;top:182px;text-align:right;color:#a0a0a0;">1596</div>
<div class="t" style="right:747px;top:182px;text-align:right;color:#a0a0a0;">0 bps</div>
<div class="t" style="right:627px;top:182px;text-align:right;color:#a0a0a0;">0 bps</div>
<div class="t" style="right:527px;top:182px;text-align:right;color:#a0a0a0;">0</div>
<div class="t" style="right:427px;top:182px;text-align:right;color:#a0a0a0;">0</div>
<div class="t" style="right:307px;top:182px;text-align:right;color:#a0a0a0;">0 bps</div>
<div class="t" style="right:187px;top:182px;text-align:right;color:#a0a0a0;">0 bps</div>
<div class="t" style="right:87px;top:182px;text-align:right;color:#a0a0a0;">0</div>
<div style="left:143px;top:211px;width:1531px;height:1px;background:#e3e3e3;"></div>
<div style="left:190px;top:197px;width:1px;height:15px;background:#e3e3e3;"></div>
<div style="left:290px;top:197px;width:1px;height:15px;background:#e3e3e3;"></div>
<div style="left:410px;top:197px;width:1px;height:15px;background:#e3e3e3;"></div>
<div style="left:460px;top:197px;width:1px;height:15px;background:#e3e3e3;"></div>
<div style="left:530px;top:197px;width:1px;height:15px;background:#e3e3e3;"></div>
<div style="left:580px;top:197px;width:1px;height:15px;background:#e3e3e3;"></div>
<div style="left:645px;top:197px;width:1px;height:15px;background:#e3e3e3;"></div>
<div style="left:700px;top:197px;width:1px;height:15px;background:#e3e3e3;"></div>
<div style="left:755px;top:197px;width:1px;height:15px;background:#e3e3e3;"></div>
<div style="left:815px;top:197px;width:1px;height:15px;background:#e3e3e3;"></div>
<div style="left:935px;top:197px;width:1px;height:15px;background:#e3e3e3;"></div>
<div style="left:1055px;top:197px;width:1px;height:15px;background:#e3e3e3;"></div>
<div style="left:1155px;top:197px;width:1px;height:15px;background:#e3e3e3;"></div>
<div style="left:1255px;top:197px;width:1px;height:15px;background:#e3e3e3;"></div>
<div style="left:1375px;top:197px;width:1px;height:15px;background:#e3e3e3;"></div>
<div style="left:1495px;top:197px;width:1px;height:15px;background:#e3e3e3;"></div>
<div style="left:1595px;top:197px;width:1px;height:15px;background:#e3e3e3;"></div>
<div class="t" style="left:145px;top:197px;">R</div>
<svg style="position:absolute;left:193px;top:198px;" width="12" height="12" viewBox="0 0 12 12"><path d="M4.6 1.4 L0.4 6 L4.6 10.6 L4.6 8.2 L2.8 6 L4.6 3.8 Z" fill="#c8323c"/><path d="M7.4 1.4 L11.6 6 L7.4 10.6 L7.4 8.2 L9.2 6 L7.4 3.8 Z" fill="#c8323c"/><circle cx="6" cy="6" r="2" fill="#2a2a2a"/><rect x="5.1" y="0" width="1.8" height="1.2" fill="#2a2a2a"/><rect x="5.1" y="1.8" width="1.8" height="1.2" fill="#2a2a2a"/><rect x="5.1" y="9" width="1.8" height="3" fill="#2a2a2a"/></svg>
<div class="t" style="left:209px;top:197px;">ether4_WAN</div>
<div class="t" style="left:293px;top:197px;">Ethernet</div>
<div class="t" style="right:1222px;top:197px;text-align:right;">1500</div>
<div class="t" style="right:1152px;top:197px;text-align:right;">1500</div>
<div class="t" style="right:1102px;top:197px;text-align:right;">1596</div>
<div class="t" style="right:747px;top:197px;text-align:right;">50.0 kbps</div>
<div class="t" style="right:627px;top:197px;text-align:right;">181.8 kbps</div>
<div class="t" style="right:527px;top:197px;text-align:right;">52</div>
<div class="t" style="right:427px;top:197px;text-align:right;">46</div>
<div class="t" style="right:307px;top:197px;text-align:right;">0 bps</div>
<div class="t" style="right:187px;top:197px;text-align:right;">180.0 kbps</div>
<div class="t" style="right:87px;top:197px;text-align:right;">0</div>
<div style="left:143px;top:226px;width:1531px;height:1px;background:#e3e3e3;"></div>
<div style="left:190px;top:212px;width:1px;height:15px;background:#e3e3e3;"></div>
<div style="left:290px;top:212px;width:1px;height:15px;background:#e3e3e3;"></div>
<div style="left:410px;top:212px;width:1px;height:15px;background:#e3e3e3;"></div>
<div style="left:460px;top:212px;width:1px;height:15px;background:#e3e3e3;"></div>
<div style="left:530px;top:212px;width:1px;height:15px;background:#e3e3e3;"></div>
<div style="left:580px;top:212px;width:1px;height:15px;background:#e3e3e3;"></div>
<div style="left:645px;top:212px;width:1px;height:15px;background:#e3e3e3;"></div>
<div style="left:700px;top:212px;width:1px;height:15px;background:#e3e3e3;"></div>
<div style="left:755px;top:212px;width:1px;height:15px;background:#e3e3e3;"></div>
<div style="left:815px;top:212px;width:1px;height:15px;background:#e3e3e3;"></div>
<div style="left:935px;top:212px;width:1px;height:15px;background:#e3e3e3;"></div>
<div style="left:1055px;top:212px;width:1px;height:15px;background:#e3e3e3;"></div>
<div style="left:1155px;top:212px;width:1px;height:15px;background:#e3e3e3;"></div>
<div style="left:1255px;top:212px;width:1px;height:15px;background:#e3e3e3;"></div>
<div style="left:1375px;top:212px;width:1px;height:15px;background:#e3e3e3;"></div>
<div style="left:1495px;top:212px;width:1px;height:15px;background:#e3e3e3;"></div>
<div style="left:1595px;top:212px;width:1px;height:15px;background:#e3e3e3;"></div>
<div class="t" style="left:145px;top:212px;">R</div>
<svg style="position:absolute;left:193px;top:213px;" width="12" height="12" viewBox="0 0 12 12"><path d="M4.6 1.4 L0.4 6 L4.6 10.6 L4.6 8.2 L2.8 6 L4.6 3.8 Z" fill="#c8323c"/><path d="M7.4 1.4 L11.6 6 L7.4 10.6 L7.4 8.2 L9.2 6 L7.4 3.8 Z" fill="#c8323c"/><circle cx="6" cy="6" r="2" fill="#2a2a2a"/><rect x="5.1" y="0" width="1.8" height="1.2" fill="#2a2a2a"/><rect x="5.1" y="1.8" width="1.8" height="1.2" fill="#2a2a2a"/><rect x="5.1" y="9" width="1.8" height="3" fill="#2a2a2a"/></svg>
<div class="t" style="left:209px;top:212px;">ether5_LAN</div>
<div class="t" style="left:293px;top:212px;">Ethernet</div>
<div class="t" style="right:1222px;top:212px;text-align:right;">1500</div>
<div class="t" style="right:1152px;top:212px;text-align:right;">1500</div>
<div class="t" style="right:1102px;top:212px;text-align:right;">1596</div>
<div class="t" style="right:747px;top:212px;text-align:right;">176.0 kbps</div>
<div class="t" style="right:627px;top:212px;text-align:right;">148.0 kbps</div>
<div class="t" style="right:527px;top:212px;text-align:right;">47</div>
<div class="t" style="right:427px;top:212px;text-align:right;">53</div>
<div class="t" style="right:307px;top:212px;text-align:right;">0 bps</div>
<div class="t" style="right:187px;top:212px;text-align:right;">144.1 kbps</div>
<div class="t" style="right:87px;top:212px;text-align:right;">0</div>
<div style="left:137px;top:231px;width:1541px;height:230px;background:#000;"></div>
<div style="left:138px;top:232px;width:1539px;height:228px;background:#f0f0f0;"></div>
<div style="left:139px;top:233px;width:1537px;height:21px;background:#bfbfbf;"></div>
<div class="t" style="left:143px;top:238px;color:#f4f4f4;">DHCP Server</div>
<div style="left:1641px;top:236px;width:15px;height:15px;border:1px solid #333;background:#efeaef;"></div>
<svg style="position:absolute;left:1642px;top:237px;" width="13" height="13" viewBox="0 0 13 13"><rect x="2.5" y="2.5" width="8" height="8" fill="none" stroke="#222" stroke-width="1.4"/><rect x="2" y="2" width="9" height="2" fill="#222"/></svg>
<div style="left:1658px;top:236px;width:15px;height:15px;border:1px solid #333;background:#efeaef;"></div>
<svg style="position:absolute;left:1659px;top:237px;" width="13" height="13" viewBox="0 0 13 13"><path d="M3 3 L10 10 M10 3 L3 10" stroke="#222" stroke-width="2.2"/></svg>
<div style="left:141px;top:281px;width:1533px;height:180px;background:#f0f0f0;border-top:1px solid #fff;border-left:1px solid #fff;border-right:1px solid #a0a0a0;border-bottom:1px solid #a0a0a0;"></div>
<div style="left:144px;top:260px;width:43px;height:21px;background:#d9d9d9;border-right:1px solid #c4c4c4;"></div>
<div class="t" style="left:144px;width:43px;top:264px;text-align:center;">DHCP</div>
<div style="left:188px;top:260px;width:58px;height:21px;background:#d9d9d9;border-right:1px solid #c4c4c4;"></div>
<div class="t" style="left:188px;width:58px;top:264px;text-align:center;">Networks</div>
<div style="left:247px;top:256px;width:47px;height:25px;background:#f0f0f0;border-left:1px solid #fff;border-top:1px solid #fff;border-right:1px solid #a0a0a0;"></div>
<div class="t" style="left:247px;width:47px;top:262px;text-align:center;">Leases</div>
<div style="left:295px;top:260px;width:48px;height:21px;background:#d9d9d9;border-right:1px solid #c4c4c4;"></div>
<div class="t" style="left:295px;width:48px;top:264px;text-align:center;">Options</div>
<div style="left:344px;top:260px;width:68px;height:21px;background:#d9d9d9;border-right:1px solid #c4c4c4;"></div>
<div class="t" style="left:344px;width:68px;top:264px;text-align:center;">Option Sets</div>
<div style="left:413px;top:260px;width:87px;height:21px;background:#d9d9d9;border-right:1px solid #c4c4c4;"></div>
<div class="t" style="left:413px;width:87px;top:264px;text-align:center;">Option Matcher</div>
<div style="left:501px;top:260px;width:39px;height:21px;background:#d9d9d9;border-right:1px solid #c4c4c4;"></div>
<div class="t" style="left:501px;width:39px;top:264px;text-align:center;">Alerts</div>
<div style="left:142px;top:285px;width:22px;height:23px;border:1px solid #adadad;background:#f0f0f0;box-shadow:inset 0 0 0 1px #fff;"></div>
<svg style="position:absolute;left:146px;top:290px;" width="14" height="14" viewBox="0 0 16 16"><path d="M6 1.5 H10 V6 H14.5 V10 H10 V14.5 H6 V10 H1.5 V6 H6 Z" fill="#0000ff" stroke="#000" stroke-width="1.2"/></svg>
<div style="left:167px;top:285px;width:22px;height:23px;border:1px solid #adadad;background:#f0f0f0;box-shadow:inset 0 0 0 1px #fff;"></div>
<svg style="position:absolute;left:171px;top:290px;" width="14" height="14" viewBox="0 0 16 16"><rect x="2.5" y="6.5" width="11" height="3.5" fill="#f0f0f0" stroke="#a8a8a8" stroke-width="1.3"/></svg>
<div style="left:197px;top:285px;width:22px;height:23px;border:1px solid #adadad;background:#f0f0f0;box-shadow:inset 0 0 0 1px #fff;"></div>
<svg style="position:absolute;left:201px;top:290px;" width="14" height="14" viewBox="0 0 16 16"><path d="M2.5 8.5 L6 12 L13.5 4.5" fill="none" stroke="#a8a8a8" stroke-width="3"/><path d="M2.5 8.5 L6 12 L13.5 4.5" fill="none" stroke="#f0f0f0" stroke-width="1.2"/></svg>
<div style="left:222px;top:285px;width:22px;height:23px;border:1px solid #adadad;background:#f0f0f0;box-shadow:inset 0 0 0 1px #fff;"></div>
<svg style="position:absolute;left:226px;top:290px;" width="14" height="14" viewBox="0 0 16 16"><path d="M3 3 L13 13 M13 3 L3 13" fill="none" stroke="#a8a8a8" stroke-width="3.2"/><path d="M3 3 L13 13 M13 3 L3 13" fill="none" stroke="#f0f0f0" stroke-width="1.4"/></svg>
<div style="left:252px;top:285px;width:22px;height:23px;border:1px solid #adadad;background:#f0f0f0;box-shadow:inset 0 0 0 1px #fff;"></div>
<svg style="position:absolute;left:256px;top:290px;" width="14" height="14" viewBox="0 0 16 16"><path d="M1.5 6.5 L4.5 3.5 L14.5 3.5 L14.5 12.5 L1.5 12.5 Z" fill="#f0f0f0" stroke="#8a8a8a" stroke-width="1"/><path d="M7 6.5 H9 M10 6.5 H12 M7 8.5 H12" stroke="#8a8a8a" stroke-width="1"/></svg>
<div style="left:282px;top:285px;width:22px;height:23px;border:1px solid #adadad;background:#f0f0f0;box-shadow:inset 0 0 0 1px #fff;"></div>
<svg style="position:absolute;left:286px;top:290px;" width="14" height="14" viewBox="0 0 16 16"><path d="M1.5 2.5 H14.5 L9.5 8 V14.5 L6.5 13.5 V8 Z" fill="#8fa8e8" stroke="#111" stroke-width="1.2" stroke-linejoin="round"/><path d="M3.5 3.5 H12.5 L9 7 H7 Z" fill="#c8d6f8"/></svg>
<div style="left:312px;top:285px;width:75px;height:23px;border:1px solid #adadad;background:#f0f0f0;box-shadow:inset 0 0 0 1px #fff;"></div>
<div class="t" style="left:312px;width:75px;top:289px;text-align:center;color:#8a8a8a;">Make Static</div>
<div style="left:389px;top:285px;width:82px;height:23px;border:1px solid #adadad;background:#f0f0f0;box-shadow:inset 0 0 0 1px #fff;"></div>
<div class="t" style="left:389px;width:82px;top:289px;text-align:center;color:#8a8a8a;">Check Status</div>
<div style="left:1611px;top:288px;width:60px;height:17px;border:1px solid #a0a0a0;background:#fff;"></div>
<div class="t" style="left:1615px;top:290px;color:#a0a0b8;font-style:italic;">Find</div>
<div style="left:142px;top:311px;width:1530px;height:150px;background:#fff;border-left:1px solid #a0a0a0;border-top:1px solid #a0a0a0;"></div>
<div style="left:143px;top:312px;width:1529px;height:16px;background:#f0f0f0;"></div>
<div style="left:142px;top:328px;width:1530px;height:1px;background:#a0a0a0;"></div>
<div style="left:176px;top:312px;width:1px;height:16px;background:#a0a0a0;"></div>
<div style="left:177px;top:312px;width:1px;height:16px;background:#fff;"></div>
<div style="left:307px;top:312px;width:1px;height:16px;background:#a0a0a0;"></div>
<div style="left:308px;top:312px;width:1px;height:16px;background:#fff;"></div>
<div style="left:447px;top:312px;width:1px;height:16px;background:#a0a0a0;"></div>
<div style="left:448px;top:312px;width:1px;height:16px;background:#fff;"></div>
<div style="left:591px;top:312px;width:1px;height:16px;background:#a0a0a0;"></div>
<div style="left:592px;top:312px;width:1px;height:16px;background:#fff;"></div>
<div style="left:666px;top:312px;width:1px;height:16px;background:#a0a0a0;"></div>
<div style="left:667px;top:312px;width:1px;height:16px;background:#fff;"></div>
<div style="left:786px;top:312px;width:1px;height:16px;background:#a0a0a0;"></div>
<div style="left:787px;top:312px;width:1px;height:16px;background:#fff;"></div>
<div style="left:893px;top:312px;width:1px;height:16px;background:#a0a0a0;"></div>
<div style="left:894px;top:312px;width:1px;height:16px;background:#fff;"></div>
<div style="left:1140px;top:312px;width:1px;height:16px;background:#a0a0a0;"></div>
<div style="left:1141px;top:312px;width:1px;height:16px;background:#fff;"></div>
<div style="left:1220px;top:312px;width:1px;height:16px;background:#a0a0a0;"></div>
<div style="left:1221px;top:312px;width:1px;height:16px;background:#fff;"></div>
<div style="left:1305px;top:312px;width:1px;height:16px;background:#a0a0a0;"></div>
<div style="left:1306px;top:312px;width:1px;height:16px;background:#fff;"></div>
<div style="left:1395px;top:312px;width:1px;height:16px;background:#a0a0a0;"></div>
<div style="left:1396px;top:312px;width:1px;height:16px;background:#fff;"></div>
<div style="left:1495px;top:312px;width:1px;height:16px;background:#a0a0a0;"></div>
<div style="left:1496px;top:312px;width:1px;height:16px;background:#fff;"></div>
<div style="left:1656px;top:312px;width:1px;height:16px;background:#a0a0a0;"></div>
<div style="left:1657px;top:312px;width:1px;height:16px;background:#fff;"></div>
<div style="left:1671px;top:312px;width:1px;height:16px;background:#a0a0a0;"></div>
<div style="left:1672px;top:312px;width:1px;height:16px;background:#fff;"></div>
<div style="left:1671px;top:311px;width:1px;height:150px;background:#a0a0a0;"></div>
<svg style="position:absolute;left:1659px;top:317px;" width="10" height="6" viewBox="0 0 10 6"><path d="M0 0 H10 L5 5.5 Z" fill="#000"/></svg>
<div class="t" style="left:179px;top:314px;width:128px;overflow:hidden;">Address</div>
<div class="t" style="left:310px;top:314px;width:137px;overflow:hidden;">MAC Address</div>
<div class="t" style="left:450px;top:314px;width:141px;overflow:hidden;">Client ID</div>
<div class="t" style="left:594px;top:314px;width:72px;overflow:hidden;">Server</div>
<div class="t" style="left:669px;top:314px;width:117px;overflow:hidden;">Active Address</div>
<div class="t" style="left:789px;top:314px;width:104px;overflow:hidden;">Active MAC Address</div>
<div class="t" style="left:896px;top:314px;width:244px;overflow:hidden;">Active Host Name</div>
<div class="t" style="left:1143px;top:314px;width:77px;overflow:hidden;">Bridge Port</div>
<div class="t" style="left:1223px;top:314px;width:82px;overflow:hidden;">Expires After</div>
<div class="t" style="left:1308px;top:314px;width:87px;overflow:hidden;">Status</div>
<div class="t" style="left:1398px;top:314px;width:97px;overflow:hidden;">Comment</div>
<svg style="position:absolute;left:297px;top:316px;" width="8" height="7" viewBox="0 0 8 7"><path d="M4 0.5 L7.5 6.5 H0.5 Z" fill="#f4f4f4" stroke="#c0c0c0" stroke-width="1"/></svg>
<svg style="position:absolute;left:437px;top:316px;" width="8" height="7" viewBox="0 0 8 7"><path d="M4 0.5 L7.5 6.5 H0.5 Z" fill="#f4f4f4" stroke="#c0c0c0" stroke-width="1"/></svg>
<div style="left:143px;top:343px;width:1529px;height:1px;background:#e3e3e3;"></div>
<div style="left:176px;top:329px;width:1px;height:15px;background:#e3e3e3;"></div>
<div style="left:307px;top:329px;width:1px;height:15px;background:#e3e3e3;"></div>
<div style="left:447px;top:329px;width:1px;height:15px;background:#e3e3e3;"></div>
<div style="left:591px;top:329px;width:1px;height:15px;background:#e3e3e3;"></div>
<div style="left:666px;top:329px;width:1px;height:15px;background:#e3e3e3;"></div>
<div style="left:786px;top:329px;width:1px;height:15px;background:#e3e3e3;"></div>
<div style="left:893px;top:329px;width:1px;height:15px;background:#e3e3e3;"></div>
<div style="left:1140px;top:329px;width:1px;height:15px;background:#e3e3e3;"></div>
<div style="left:1220px;top:329px;width:1px;height:15px;background:#e3e3e3;"></div>
<div style="left:1305px;top:329px;width:1px;height:15px;background:#e3e3e3;"></div>
<div style="left:1395px;top:329px;width:1px;height:15px;background:#e3e3e3;"></div>
<div style="left:1495px;top:329px;width:1px;height:15px;background:#e3e3e3;"></div>
<div class="t" style="left:145px;top:329px;">D</div>
<div class="t" style="left:179px;top:329px;">192.168.100.23</div>
<div class="t" style="left:310px;top:329px;">08:7F:98:02:F4:3D</div>
<div class="t" style="left:594px;top:329px;">dhcp1</div>
<div class="t" style="left:669px;top:329px;">192.168.100.23</div>
<div class="t" style="left:789px;top:329px;">08:7F:98:02:F4:3D</div>
<div class="t" style="left:896px;top:329px;">vivo-1902</div>
<div class="t" style="right:377px;top:329px;text-align:right;">00:19:58</div>
<div class="t" style="left:1308px;top:329px;">bound</div>
<div style="left:143px;top:358px;width:1529px;height:1px;background:#e3e3e3;"></div>
<div style="left:176px;top:344px;width:1px;height:15px;background:#e3e3e3;"></div>
<div style="left:307px;top:344px;width:1px;height:15px;background:#e3e3e3;"></div>
<div style="left:447px;top:344px;width:1px;height:15px;background:#e3e3e3;"></div>
<div style="left:591px;top:344px;width:1px;height:15px;background:#e3e3e3;"></div>
<div style="left:666px;top:344px;width:1px;height:15px;background:#e3e3e3;"></div>
<div style="left:786px;top:344px;width:1px;height:15px;background:#e3e3e3;"></div>
<div style="left:893px;top:344px;width:1px;height:15px;background:#e3e3e3;"></div>
<div style="left:1140px;top:344px;width:1px;height:15px;background:#e3e3e3;"></div>
<div style="left:1220px;top:344px;width:1px;height:15px;background:#e3e3e3;"></div>
<div style="left:1305px;top:344px;width:1px;height:15px;background:#e3e3e3;"></div>
<div style="left:1395px;top:344px;width:1px;height:15px;background:#e3e3e3;"></div>
<div style="left:1495px;top:344px;width:1px;height:15px;background:#e3e3e3;"></div>
<div class="t" style="left:145px;top:344px;">D</div>
<div class="t" style="left:179px;top:344px;">192.168.100.20</div>
<div class="t" style="left:310px;top:344px;">10:6F:D9:15:6E:75</div>
<div class="t" style="left:450px;top:344px;">1:10:6f:d9:15:6e:75</div>
<div class="t" style="left:594px;top:344px;">dhcp1</div>
<div class="t" style="left:669px;top:344px;">192.168.100.20</div>
<div class="t" style="left:789px;top:344px;">10:6F:D9:15:6E:75</div>
<div class="t" style="left:896px;top:344px;">Waqas</div>
<div class="t" style="left:1143px;top:344px;">ether2</div>
<div class="t" style="right:377px;top:344px;text-align:right;">00:23:53</div>
<div class="t" style="left:1308px;top:344px;">bound</div>
<div style="left:143px;top:373px;width:1529px;height:1px;background:#e3e3e3;"></div>
<div style="left:176px;top:359px;width:1px;height:15px;background:#e3e3e3;"></div>
<div style="left:307px;top:359px;width:1px;height:15px;background:#e3e3e3;"></div>
<div style="left:447px;top:359px;width:1px;height:15px;background:#e3e3e3;"></div>
<div style="left:591px;top:359px;width:1px;height:15px;background:#e3e3e3;"></div>
<div style="left:666px;top:359px;width:1px;height:15px;background:#e3e3e3;"></div>
<div style="left:786px;top:359px;width:1px;height:15px;background:#e3e3e3;"></div>
<div style="left:893px;top:359px;width:1px;height:15px;background:#e3e3e3;"></div>
<div style="left:1140px;top:359px;width:1px;height:15px;background:#e3e3e3;"></div>
<div style="left:1220px;top:359px;width:1px;height:15px;background:#e3e3e3;"></div>
<div style="left:1305px;top:359px;width:1px;height:15px;background:#e3e3e3;"></div>
<div style="left:1395px;top:359px;width:1px;height:15px;background:#e3e3e3;"></div>
<div style="left:1495px;top:359px;width:1px;height:15px;background:#e3e3e3;"></div>
<div class="t" style="left:145px;top:359px;">D</div>
<div class="t" style="left:179px;top:359px;">192.168.100.21</div>
<div class="t" style="left:310px;top:359px;">12:75:38:FD:39:7F</div>
<div class="t" style="left:450px;top:359px;">1:12:75:38:fd:39:7f</div>
<div class="t" style="left:594px;top:359px;">dhcp1</div>
<div class="t" style="left:669px;top:359px;">192.168.100.21</div>
<div class="t" style="left:789px;top:359px;">12:75:38:FD:39:7F</div>
<div class="t" style="left:1143px;top:359px;">ether2</div>
<div class="t" style="right:377px;top:359px;text-align:right;">00:19:55</div>
<div class="t" style="left:1308px;top:359px;">bound</div>
<div style="left:143px;top:388px;width:1529px;height:1px;background:#e3e3e3;"></div>
<div style="left:176px;top:374px;width:1px;height:15px;background:#e3e3e3;"></div>
<div style="left:307px;top:374px;width:1px;height:15px;background:#e3e3e3;"></div>
<div style="left:447px;top:374px;width:1px;height:15px;background:#e3e3e3;"></div>
<div style="left:591px;top:374px;width:1px;height:15px;background:#e3e3e3;"></div>
<div style="left:666px;top:374px;width:1px;height:15px;background:#e3e3e3;"></div>
<div style="left:786px;top:374px;width:1px;height:15px;background:#e3e3e3;"></div>
<div style="left:893px;top:374px;width:1px;height:15px;background:#e3e3e3;"></div>
<div style="left:1140px;top:374px;width:1px;height:15px;background:#e3e3e3;"></div>
<div style="left:1220px;top:374px;width:1px;height:15px;background:#e3e3e3;"></div>
<div style="left:1305px;top:374px;width:1px;height:15px;background:#e3e3e3;"></div>
<div style="left:1395px;top:374px;width:1px;height:15px;background:#e3e3e3;"></div>
<div style="left:1495px;top:374px;width:1px;height:15px;background:#e3e3e3;"></div>
<div class="t" style="left:145px;top:374px;">D</div>
<div class="t" style="left:179px;top:374px;">192.168.100.250</div>
<div class="t" style="left:310px;top:374px;">12:97:2E:51:52:8E</div>
<div class="t" style="left:450px;top:374px;">1:12:97:2e:51:52:8e</div>
<div class="t" style="left:594px;top:374px;">dhcp1</div>
<div class="t" style="left:669px;top:374px;">192.168.100.250</div>
<div class="t" style="left:789px;top:374px;">12:97:2E:51:52:8E</div>
<div class="t" style="left:896px;top:374px;">Syed-Asif-s-A73</div>
<div class="t" style="right:377px;top:374px;text-align:right;">00:16:25</div>
<div class="t" style="left:1308px;top:374px;">bound</div>
<div style="left:143px;top:403px;width:1529px;height:1px;background:#e3e3e3;"></div>
<div style="left:176px;top:389px;width:1px;height:15px;background:#e3e3e3;"></div>
<div style="left:307px;top:389px;width:1px;height:15px;background:#e3e3e3;"></div>
<div style="left:447px;top:389px;width:1px;height:15px;background:#e3e3e3;"></div>
<div style="left:591px;top:389px;width:1px;height:15px;background:#e3e3e3;"></div>
<div style="left:666px;top:389px;width:1px;height:15px;background:#e3e3e3;"></div>
<div style="left:786px;top:389px;width:1px;height:15px;background:#e3e3e3;"></div>
<div style="left:893px;top:389px;width:1px;height:15px;background:#e3e3e3;"></div>
<div style="left:1140px;top:389px;width:1px;height:15px;background:#e3e3e3;"></div>
<div style="left:1220px;top:389px;width:1px;height:15px;background:#e3e3e3;"></div>
<div style="left:1305px;top:389px;width:1px;height:15px;background:#e3e3e3;"></div>
<div style="left:1395px;top:389px;width:1px;height:15px;background:#e3e3e3;"></div>
<div style="left:1495px;top:389px;width:1px;height:15px;background:#e3e3e3;"></div>
<div class="t" style="left:145px;top:389px;">D</div>
<div class="t" style="left:179px;top:389px;">192.168.100.22</div>
<div class="t" style="left:310px;top:389px;">96:FC:EB:3C:72:76</div>
<div class="t" style="left:450px;top:389px;">1:96:fc:eb:3c:72:76</div>
<div class="t" style="left:594px;top:389px;">dhcp1</div>
<div class="t" style="left:669px;top:389px;">192.168.100.22</div>
<div class="t" style="left:789px;top:389px;">96:FC:EB:3C:72:76</div>
<div class="t" style="left:896px;top:389px;">Tahir-s-A23</div>
<div class="t" style="right:377px;top:389px;text-align:right;">00:27:47</div>
<div class="t" style="left:1308px;top:389px;">bound</div>
<div style="left:143px;top:418px;width:1529px;height:1px;background:#e3e3e3;"></div>
<div style="left:176px;top:404px;width:1px;height:15px;background:#e3e3e3;"></div>
<div style="left:307px;top:404px;width:1px;height:15px;background:#e3e3e3;"></div>
<div style="left:447px;top:404px;width:1px;height:15px;background:#e3e3e3;"></div>
<div style="left:591px;top:404px;width:1px;height:15px;background:#e3e3e3;"></div>
<div style="left:666px;top:404px;width:1px;height:15px;background:#e3e3e3;"></div>
<div style="left:786px;top:404px;width:1px;height:15px;background:#e3e3e3;"></div>
<div style="left:893px;top:404px;width:1px;height:15px;background:#e3e3e3;"></div>
<div style="left:1140px;top:404px;width:1px;height:15px;background:#e3e3e3;"></div>
<div style="left:1220px;top:404px;width:1px;height:15px;background:#e3e3e3;"></div>
<div style="left:1305px;top:404px;width:1px;height:15px;background:#e3e3e3;"></div>
<div style="left:1395px;top:404px;width:1px;height:15px;background:#e3e3e3;"></div>
<div style="left:1495px;top:404px;width:1px;height:15px;background:#e3e3e3;"></div>
<div class="t" style="left:145px;top:404px;">D</div>
<div class="t" style="left:179px;top:404px;">192.168.100.19</div>
<div class="t" style="left:310px;top:404px;">DE:3C:FB:FF:B3:BF</div>
<div class="t" style="left:450px;top:404px;">1:de:3c:fb:ff:b3:bf</div>
<div class="t" style="left:594px;top:404px;">dhcp1</div>
<div class="t" style="left:669px;top:404px;">192.168.100.19</div>
<div class="t" style="left:789px;top:404px;">DE:3C:FB:FF:B3:BF</div>
<div class="t" style="left:1143px;top:404px;">ether2</div>
<div class="t" style="right:377px;top:404px;text-align:right;">00:29:43</div>
<div class="t" style="left:1308px;top:404px;">bound</div>
<div style="left:143px;top:433px;width:1529px;height:1px;background:#e3e3e3;"></div>
<div style="left:176px;top:419px;width:1px;height:15px;background:#e3e3e3;"></div>
<div style="left:307px;top:419px;width:1px;height:15px;background:#e3e3e3;"></div>
<div style="left:447px;top:419px;width:1px;height:15px;background:#e3e3e3;"></div>
<div style="left:591px;top:419px;width:1px;height:15px;background:#e3e3e3;"></div>
<div style="left:666px;top:419px;width:1px;height:15px;background:#e3e3e3;"></div>
<div style="left:786px;top:419px;width:1px;height:15px;background:#e3e3e3;"></div>
<div style="left:893px;top:419px;width:1px;height:15px;background:#e3e3e3;"></div>
<div style="left:1140px;top:419px;width:1px;height:15px;background:#e3e3e3;"></div>
<div style="left:1220px;top:419px;width:1px;height:15px;background:#e3e3e3;"></div>
<div style="left:1305px;top:419px;width:1px;height:15px;background:#e3e3e3;"></div>
<div style="left:1395px;top:419px;width:1px;height:15px;background:#e3e3e3;"></div>
<div style="left:1495px;top:419px;width:1px;height:15px;background:#e3e3e3;"></div>
<div class="t" style="left:145px;top:419px;">D</div>
<div class="t" style="left:179px;top:419px;">192.168.100.24</div>
<div class="t" style="left:310px;top:419px;">EC:2E:98:3B:CD:37</div>
<div class="t" style="left:450px;top:419px;">1:ec:2e:98:3b:cd:37</div>
<div class="t" style="left:594px;top:419px;">dhcp1</div>
<div class="t" style="left:669px;top:419px;">192.168.100.24</div>
<div class="t" style="left:789px;top:419px;">EC:2E:98:3B:CD:37</div>
<div class="t" style="left:896px;top:419px;">asif</div>
<div class="t" style="left:1143px;top:419px;">ether2</div>
<div class="t" style="right:377px;top:419px;text-align:right;">00:28:14</div>
<div class="t" style="left:1308px;top:419px;">bound</div>
<div style="left:143px;top:448px;width:1529px;height:1px;background:#e3e3e3;"></div>
<div style="left:176px;top:434px;width:1px;height:15px;background:#e3e3e3;"></div>
<div style="left:307px;top:434px;width:1px;height:15px;background:#e3e3e3;"></div>
<div style="left:447px;top:434px;width:1px;height:15px;background:#e3e3e3;"></div>
<div style="left:591px;top:434px;width:1px;height:15px;background:#e3e3e3;"></div>
<div style="left:666px;top:434px;width:1px;height:15px;background:#e3e3e3;"></div>
<div style="left:786px;top:434px;width:1px;height:15px;background:#e3e3e3;"></div>
<div style="left:893px;top:434px;width:1px;height:15px;background:#e3e3e3;"></div>
<div style="left:1140px;top:434px;width:1px;height:15px;background:#e3e3e3;"></div>
<div style="left:1220px;top:434px;width:1px;height:15px;background:#e3e3e3;"></div>
<div style="left:1305px;top:434px;width:1px;height:15px;background:#e3e3e3;"></div>
<div style="left:1395px;top:434px;width:1px;height:15px;background:#e3e3e3;"></div>
<div style="left:1495px;top:434px;width:1px;height:15px;background:#e3e3e3;"></div>
<div class="t" style="left:145px;top:434px;">D</div>
<div class="t" style="left:179px;top:434px;">192.168.100.54</div>
<div class="t" style="left:310px;top:434px;">F8:BC:12:83:94:BA</div>
<div class="t" style="left:450px;top:434px;">1:f8:bc:12:83:94:ba</div>
<div class="t" style="left:594px;top:434px;">dhcp1</div>
<div class="t" style="left:669px;top:434px;">192.168.100.54</div>
<div class="t" style="left:789px;top:434px;">F8:BC:12:83:94:BA</div>
<div class="t" style="left:896px;top:434px;">DESKTOP-UATF3TA</div>
<div class="t" style="left:1143px;top:434px;">ether2</div>
<div class="t" style="right:377px;top:434px;text-align:right;">00:29:09</div>
<div class="t" style="left:1308px;top:434px;">bound</div>
<div style="left:137px;top:454px;width:1543px;height:409px;background:#000;"></div>
<div style="left:138px;top:455px;width:1541px;height:407px;background:#f0f0f0;"></div>
<div style="left:139px;top:456px;width:1539px;height:21px;background:#bfbfbf;"></div>
<div class="t" style="left:143px;top:461px;color:#f4f4f4;">Bridge</div>
<div style="left:1643px;top:459px;width:15px;height:15px;border:1px solid #333;background:#efeaef;"></div>
<svg style="position:absolute;left:1644px;top:460px;" width="13" height="13" viewBox="0 0 13 13"><rect x="2.5" y="2.5" width="8" height="8" fill="none" stroke="#222" stroke-width="1.4"/><rect x="2" y="2" width="9" height="2" fill="#222"/></svg>
<div style="left:1660px;top:459px;width:15px;height:15px;border:1px solid #333;background:#efeaef;"></div>
<svg style="position:absolute;left:1661px;top:460px;" width="13" height="13" viewBox="0 0 13 13"><path d="M3 3 L10 10 M10 3 L3 10" stroke="#222" stroke-width="2.2"/></svg>
<div style="left:141px;top:504px;width:1535px;height:355px;background:#f0f0f0;border-top:1px solid #fff;border-left:1px solid #fff;border-right:1px solid #a0a0a0;border-bottom:1px solid #a0a0a0;"></div>
<div style="left:142px;top:479px;width:46px;height:25px;background:#f0f0f0;border-left:1px solid #fff;border-top:1px solid #fff;border-right:1px solid #a0a0a0;"></div>
<div class="t" style="left:142px;width:46px;top:485px;text-align:center;">Bridge</div>
<div style="left:190px;top:483px;width:34px;height:21px;background:#d9d9d9;border-right:1px solid #c4c4c4;"></div>
<div class="t" style="left:190px;width:34px;top:487px;text-align:center;">Ports</div>
<div style="left:226px;top:483px;width:86px;height:21px;background:#d9d9d9;border-right:1px solid #c4c4c4;"></div>
<div class="t" style="left:226px;width:86px;top:487px;text-align:center;">Port Extensions</div>
<div style="left:313px;top:483px;width:45px;height:21px;background:#d9d9d9;border-right:1px solid #c4c4c4;"></div>
<div class="t" style="left:313px;width:45px;top:487px;text-align:center;">VLANs</div>
<div style="left:360px;top:483px;width:44px;height:21px;background:#d9d9d9;border-right:1px solid #c4c4c4;"></div>
<div class="t" style="left:360px;width:44px;top:487px;text-align:center;">MSTIs</div>
<div style="left:405px;top:483px;width:106px;height:21px;background:#d9d9d9;border-right:1px solid #c4c4c4;"></div>
<div class="t" style="left:405px;width:106px;top:487px;text-align:center;">Port MST Overrides</div>
<div style="left:512px;top:483px;width:40px;height:21px;background:#d9d9d9;border-right:1px solid #c4c4c4;"></div>
<div class="t" style="left:512px;width:40px;top:487px;text-align:center;">Filters</div>
<div style="left:553px;top:483px;width:35px;height:21px;background:#d9d9d9;border-right:1px solid #c4c4c4;"></div>
<div class="t" style="left:553px;width:35px;top:487px;text-align:center;">NAT</div>
<div style="left:589px;top:483px;width:40px;height:21px;background:#d9d9d9;border-right:1px solid #c4c4c4;"></div>
<div class="t" style="left:589px;width:40px;top:487px;text-align:center;">Hosts</div>
<div style="left:630px;top:483px;width:37px;height:21px;background:#d9d9d9;border-right:1px solid #c4c4c4;"></div>
<div class="t" style="left:630px;width:37px;top:487px;text-align:center;">MDB</div>
<div style="left:142px;top:508px;width:22px;height:23px;border:1px solid #adadad;background:#f0f0f0;box-shadow:inset 0 0 0 1px #fff;"></div>
<svg style="position:absolute;left:146px;top:513px;" width="14" height="14" viewBox="0 0 16 16"><path d="M6 1.5 H10 V6 H14.5 V10 H10 V14.5 H6 V10 H1.5 V6 H6 Z" fill="#0000ff" stroke="#000" stroke-width="1.2"/></svg>
<div style="left:167px;top:508px;width:22px;height:23px;border:1px solid #adadad;background:#f0f0f0;box-shadow:inset 0 0 0 1px #fff;"></div>
<svg style="position:absolute;left:171px;top:513px;" width="14" height="14" viewBox="0 0 16 16"><rect x="2" y="6" width="12" height="4" fill="#ff0000" stroke="#000" stroke-width="1"/></svg>
<div style="left:197px;top:508px;width:22px;height:23px;border:1px solid #adadad;background:#f0f0f0;box-shadow:inset 0 0 0 1px #fff;"></div>
<svg style="position:absolute;left:201px;top:513px;" width="14" height="14" viewBox="0 0 16 16"><path d="M2.5 8 L6 12 L13.5 4" fill="none" stroke="#000" stroke-width="3.6"/><path d="M2.5 8 L6 12 L13.5 4" fill="none" stroke="#0000ff" stroke-width="2"/></svg>
<div style="left:222px;top:508px;width:22px;height:23px;border:1px solid #adadad;background:#f0f0f0;box-shadow:inset 0 0 0 1px #fff;"></div>
<svg style="position:absolute;left:226px;top:513px;" width="14" height="14" viewBox="0 0 16 16"><path d="M3 3 L13 13 M13 3 L3 13" fill="none" stroke="#000" stroke-width="4"/><path d="M3 3 L13 13 M13 3 L3 13" fill="none" stroke="#ff0000" stroke-width="2.4"/></svg>
<div style="left:252px;top:508px;width:22px;height:23px;border:1px solid #adadad;background:#f0f0f0;box-shadow:inset 0 0 0 1px #fff;"></div>
<svg style="position:absolute;left:256px;top:513px;" width="14" height="14" viewBox="0 0 16 16"><path d="M1.5 5.5 L4 2.5 L14.5 2.5 L14.5 12.5 L1.5 12.5 Z" fill="#f8f000" stroke="#111" stroke-width="1.3"/><path d="M7 5.5 H9 M10.5 5.5 H12.5 M5 8 H12.5" stroke="#c8c8a0" stroke-width="0.9"/></svg>
<div style="left:282px;top:508px;width:22px;height:23px;border:1px solid #adadad;background:#f0f0f0;box-shadow:inset 0 0 0 1px #fff;"></div>
<svg style="position:absolute;left:286px;top:513px;" width="14" height="14" viewBox="0 0 16 16"><path d="M1.5 2.5 H14.5 L9.5 8 V14.5 L6.5 13.5 V8 Z" fill="#8fa8e8" stroke="#111" stroke-width="1.2" stroke-linejoin="round"/><path d="M3.5 3.5 H12.5 L9 7 H7 Z" fill="#c8d6f8"/></svg>
<div style="left:312px;top:508px;width:55px;height:23px;border:1px solid #adadad;background:#f0f0f0;box-shadow:inset 0 0 0 1px #fff;"></div>
<div class="t" style="left:312px;width:55px;top:512px;text-align:center;">Settings</div>
<div style="left:1613px;top:511px;width:60px;height:17px;border:1px solid #a0a0a0;background:#fff;"></div>
<div class="t" style="left:1617px;top:513px;color:#a0a0b8;font-style:italic;">Find</div>
<div style="left:142px;top:534px;width:1532px;height:288px;background:#fff;border-left:1px solid #a0a0a0;border-top:1px solid #a0a0a0;"></div>
<div style="left:143px;top:535px;width:1531px;height:16px;background:#f0f0f0;"></div>
<div style="left:142px;top:551px;width:1532px;height:1px;background:#a0a0a0;"></div>
<div style="left:143px;top:552px;width:1531px;height:15px;background:#9dc1ea;"></div>
<div style="left:190px;top:535px;width:1px;height:16px;background:#a0a0a0;"></div>
<div style="left:191px;top:535px;width:1px;height:16px;background:#fff;"></div>
<div style="left:360px;top:535px;width:1px;height:16px;background:#a0a0a0;"></div>
<div style="left:361px;top:535px;width:1px;height:16px;background:#fff;"></div>
<div style="left:479px;top:535px;width:1px;height:16px;background:#a0a0a0;"></div>
<div style="left:480px;top:535px;width:1px;height:16px;background:#fff;"></div>
<div style="left:529px;top:535px;width:1px;height:16px;background:#a0a0a0;"></div>
<div style="left:530px;top:535px;width:1px;height:16px;background:#fff;"></div>
<div style="left:649px;top:535px;width:1px;height:16px;background:#a0a0a0;"></div>
<div style="left:650px;top:535px;width:1px;height:16px;background:#fff;"></div>
<div style="left:769px;top:535px;width:1px;height:16px;background:#a0a0a0;"></div>
<div style="left:770px;top:535px;width:1px;height:16px;background:#fff;"></div>
<div style="left:869px;top:535px;width:1px;height:16px;background:#a0a0a0;"></div>
<div style="left:870px;top:535px;width:1px;height:16px;background:#fff;"></div>
<div style="left:969px;top:535px;width:1px;height:16px;background:#a0a0a0;"></div>
<div style="left:970px;top:535px;width:1px;height:16px;background:#fff;"></div>
<div style="left:1089px;top:535px;width:1px;height:16px;background:#a0a0a0;"></div>
<div style="left:1090px;top:535px;width:1px;height:16px;background:#fff;"></div>
<div style="left:1209px;top:535px;width:1px;height:16px;background:#a0a0a0;"></div>
<div style="left:1210px;top:535px;width:1px;height:16px;background:#fff;"></div>
<div style="left:1309px;top:535px;width:1px;height:16px;background:#a0a0a0;"></div>
<div style="left:1310px;top:535px;width:1px;height:16px;background:#fff;"></div>
<div style="left:1409px;top:535px;width:1px;height:16px;background:#a0a0a0;"></div>
<div style="left:1410px;top:535px;width:1px;height:16px;background:#fff;"></div>
<div style="left:1524px;top:535px;width:1px;height:16px;background:#a0a0a0;"></div>
<div style="left:1525px;top:535px;width:1px;height:16px;background:#fff;"></div>
<div style="left:1612px;top:535px;width:1px;height:16px;background:#a0a0a0;"></div>
<div style="left:1613px;top:535px;width:1px;height:16px;background:#fff;"></div>
<div style="left:1658px;top:535px;width:1px;height:16px;background:#a0a0a0;"></div>
<div style="left:1659px;top:535px;width:1px;height:16px;background:#fff;"></div>
<div style="left:1673px;top:535px;width:1px;height:16px;background:#a0a0a0;"></div>
<div style="left:1674px;top:535px;width:1px;height:16px;background:#fff;"></div>
<div style="left:1673px;top:534px;width:1px;height:288px;background:#a0a0a0;"></div>
<svg style="position:absolute;left:1661px;top:540px;" width="10" height="6" viewBox="0 0 10 6"><path d="M0 0 H10 L5 5.5 Z" fill="#000"/></svg>
<div class="t" style="left:193px;top:537px;width:167px;overflow:hidden;">Name</div>
<div class="t" style="left:363px;top:537px;width:116px;overflow:hidden;">Type</div>
<div class="t" style="left:482px;top:537px;width:47px;overflow:hidden;">L2 MTU</div>
<div class="t" style="left:532px;top:537px;width:117px;overflow:hidden;">Tx</div>
<div class="t" style="left:652px;top:537px;width:117px;overflow:hidden;">Rx</div>
<div class="t" style="left:772px;top:537px;width:97px;overflow:hidden;">Tx Packet (p/s)</div>
<div class="t" style="left:872px;top:537px;width:97px;overflow:hidden;">Rx Packet (p/s)</div>
<div class="t" style="left:972px;top:537px;width:117px;overflow:hidden;">FP Tx</div>
<div class="t" style="left:1092px;top:537px;width:117px;overflow:hidden;">FP Rx</div>
<div class="t" style="left:1212px;top:537px;width:97px;overflow:hidden;">FP Tx Packet (p/s)</div>
<div class="t" style="left:1312px;top:537px;width:97px;overflow:hidden;">FP Rx Packet (p/s)</div>
<div class="t" style="left:1412px;top:537px;width:112px;overflow:hidden;">MAC Address</div>
<div class="t" style="left:1527px;top:537px;width:85px;overflow:hidden;">DHCP Snooping</div>
<div class="t" style="left:1615px;top:537px;width:43px;overflow:hidden;">Protocol</div>
<svg style="position:absolute;left:350px;top:539px;" width="8" height="7" viewBox="0 0 8 7"><path d="M4 0.5 L7.5 6.5 H0.5 Z" fill="#f4f4f4" stroke="#c0c0c0" stroke-width="1"/></svg>
<svg style="position:absolute;left:759px;top:539px;" width="8" height="7" viewBox="0 0 8 7"><path d="M4 6.5 L7.5 0.5 H0.5 Z" fill="#f4f4f4" stroke="#909090" stroke-width="1"/></svg>
<div style="left:143px;top:566px;width:1531px;height:1px;background:#e3e3e3;"></div>
<div style="left:190px;top:552px;width:1px;height:15px;background:#e3e3e3;"></div>
<div style="left:360px;top:552px;width:1px;height:15px;background:#e3e3e3;"></div>
<div style="left:479px;top:552px;width:1px;height:15px;background:#e3e3e3;"></div>
<div style="left:529px;top:552px;width:1px;height:15px;background:#e3e3e3;"></div>
<div style="left:649px;top:552px;width:1px;height:15px;background:#e3e3e3;"></div>
<div style="left:769px;top:552px;width:1px;height:15px;background:#e3e3e3;"></div>
<div style="left:869px;top:552px;width:1px;height:15px;background:#e3e3e3;"></div>
<div style="left:969px;top:552px;width:1px;height:15px;background:#e3e3e3;"></div>
<div style="left:1089px;top:552px;width:1px;height:15px;background:#e3e3e3;"></div>
<div style="left:1209px;top:552px;width:1px;height:15px;background:#e3e3e3;"></div>
<div style="left:1309px;top:552px;width:1px;height:15px;background:#e3e3e3;"></div>
<div style="left:1409px;top:552px;width:1px;height:15px;background:#e3e3e3;"></div>
<div style="left:1524px;top:552px;width:1px;height:15px;background:#e3e3e3;"></div>
<div style="left:1612px;top:552px;width:1px;height:15px;background:#e3e3e3;"></div>
<div class="t" style="left:145px;top:552px;">R</div>
<svg style="position:absolute;left:193px;top:554px;" width="12" height="10" viewBox="0 0 12 10"><circle cx="4" cy="3.2" r="2.3" fill="#3a8fd0" stroke="#3a6f9a" stroke-width="0.8"/><circle cx="8" cy="3.2" r="2.3" fill="#3a8fd0" stroke="#3a6f9a" stroke-width="0.8"/><path d="M0.4 9.6 Q0.4 5.6 4 5.6 Q6 5.6 6 7 Q6 5.6 8 5.6 Q11.6 5.6 11.6 9.6 Z" fill="#2e8ad8" stroke="#3a6f9a" stroke-width="0.8"/><path d="M6 6.4 V9.4" stroke="#6aa8d8" stroke-width="0.6"/></svg>
<div class="t" style="left:209px;top:552px;">Bridge_Central Park</div>
<div class="t" style="left:363px;top:552px;">Bridge</div>
<div class="t" style="right:1153px;top:552px;text-align:right;">1596</div>
<div class="t" style="right:1033px;top:552px;text-align:right;">73.2 kbps</div>
<div class="t" style="right:913px;top:552px;text-align:right;">92.5 kbps</div>
<div class="t" style="right:813px;top:552px;text-align:right;">8</div>
<div class="t" style="right:713px;top:552px;text-align:right;">87</div>
<div class="t" style="right:593px;top:552px;text-align:right;">0 bps</div>
<div class="t" style="right:473px;top:552px;text-align:right;">0 bps</div>
<div class="t" style="right:373px;top:552px;text-align:right;">0</div>
<div class="t" style="right:273px;top:552px;text-align:right;">0</div>
<div class="t" style="left:1412px;top:552px;">18:FD:74:B3:8E:5C</div>
<div class="t" style="left:1527px;top:552px;">yes</div>
<div class="t" style="left:1615px;top:552px;">RSTP</div>
<div style="left:142px;top:822px;width:1532px;height:16px;background:#f0f0f0;border-top:1px solid #a0a0a0;border-bottom:1px solid #a0a0a0;"></div>
<div style="left:1612px;top:823px;width:46px;height:14px;background:#d6d6d6;border-left:1px solid #c0c0c0;"></div>
<div style="left:1658px;top:823px;width:16px;height:14px;background:#f0f0f0;border-left:1px solid #c0c0c0;"></div>
<svg style="position:absolute;left:1661px;top:825px;" width="10" height="10" viewBox="0 0 10 10"><path d="M1 3.5 H5 V1 L9 5 L5 9 V6.5 H1 Z" fill="#000"/></svg>
<div style="left:1673px;top:822px;width:1px;height:16px;background:#a0a0a0;"></div>
<div style="left:142px;top:566px;width:495px;height:435px;background:#000;"></div>
<div style="left:143px;top:567px;width:493px;height:433px;background:#f0f0f0;"></div>
<div style="left:144px;top:568px;width:491px;height:21px;background:#4f4fcc;"></div>
<div class="t" style="left:148px;top:573px;color:#fff;">Interface &lt;Bridge_Central Park&gt;</div>
<div style="left:600px;top:571px;width:15px;height:15px;border:1px solid #333;background:#efeaef;"></div>
<svg style="position:absolute;left:601px;top:572px;" width="13" height="13" viewBox="0 0 13 13"><rect x="2.5" y="2.5" width="8" height="8" fill="none" stroke="#222" stroke-width="1.4"/><rect x="2" y="2" width="9" height="2" fill="#222"/></svg>
<div style="left:617px;top:571px;width:15px;height:15px;border:1px solid #333;background:#efeaef;"></div>
<svg style="position:absolute;left:618px;top:572px;" width="13" height="13" viewBox="0 0 13 13"><path d="M3 3 L10 10 M10 3 L3 10" stroke="#222" stroke-width="2.2"/></svg>
<div style="left:145px;top:616px;width:349px;height:385px;background:#f0f0f0;border-top:1px solid #fff;border-left:1px solid #fff;border-right:1px solid #a0a0a0;border-bottom:1px solid #a0a0a0;"></div>
<div style="left:147px;top:591px;width:53px;height:25px;background:#f0f0f0;border-left:1px solid #fff;border-top:1px solid #fff;border-right:1px solid #a0a0a0;"></div>
<div class="t" style="left:147px;width:53px;top:597px;text-align:center;">General</div>
<div style="left:200px;top:595px;width:34px;height:21px;background:#d9d9d9;border-right:1px solid #c4c4c4;"></div>
<div class="t" style="left:200px;width:34px;top:599px;text-align:center;">STP</div>
<div style="left:235px;top:595px;width:41px;height:21px;background:#d9d9d9;border-right:1px solid #c4c4c4;"></div>
<div class="t" style="left:235px;width:41px;top:599px;text-align:center;">VLAN</div>
<div style="left:277px;top:595px;width:43px;height:21px;background:#d9d9d9;border-right:1px solid #c4c4c4;"></div>
<div class="t" style="left:277px;width:43px;top:599px;text-align:center;">Status</div>
<div style="left:321px;top:595px;width:43px;height:21px;background:#d9d9d9;border-right:1px solid #c4c4c4;"></div>
<div class="t" style="left:321px;width:43px;top:599px;text-align:center;">Traffic</div>
<div class="t" style="right:1426px;top:626px;text-align:right;">Name:</div>
<div style="left:259px;top:624px;width:227px;height:17px;border:1px solid #a0a0a0;background:#fff;"></div>
<div style="left:261px;top:626px;width:96px;height:13px;background:#0078d7;"></div>
<div class="t" style="left:262px;top:626px;color:#fff;">Bridge_Central Park</div>
<div class="t" style="right:1426px;top:649px;text-align:right;">Type:</div>
<div style="left:259px;top:647px;width:227px;height:17px;border:1px solid #a0a0a0;background:#f0f0f0;"></div>
<div class="t" style="left:262px;top:649px;">Bridge</div>
<div class="t" style="right:1426px;top:672px;text-align:right;">MTU:</div>
<div style="left:259px;top:670px;width:209px;height:17px;border:1px solid #a0a0a0;background:#f0f0f0;"></div>
<svg style="position:absolute;left:474px;top:675px;" width="10" height="6" viewBox="0 0 10 6"><path d="M0 0 H10 L5 5.5 Z" fill="#000"/></svg>
<div class="t" style="right:1426px;top:695px;text-align:right;">Actual MTU:</div>
<div style="left:259px;top:693px;width:227px;height:17px;border:1px solid #a0a0a0;background:#f0f0f0;"></div>
<div class="t" style="left:262px;top:695px;">1500</div>
<div class="t" style="right:1426px;top:718px;text-align:right;">L2 MTU:</div>
<div style="left:259px;top:716px;width:227px;height:17px;border:1px solid #a0a0a0;background:#f0f0f0;"></div>
<div class="t" style="left:262px;top:718px;">1596</div>
<div class="t" style="right:1426px;top:741px;text-align:right;">MAC Address:</div>
<div style="left:259px;top:739px;width:227px;height:17px;border:1px solid #a0a0a0;background:#f0f0f0;"></div>
<div class="t" style="left:262px;top:741px;">18:FD:74:B3:8E:5C</div>
<div class="t" style="right:1426px;top:764px;text-align:right;">ARP:</div>
<div style="left:259px;top:762px;width:209px;height:17px;border:1px solid #a0a0a0;background:#fff;"></div>
<div class="t" style="left:262px;top:764px;">enabled</div>
<div style="left:469px;top:762px;width:17px;height:17px;border:1px solid #a0a0a0;background:#f0f0f0;"></div>
<svg style="position:absolute;left:472px;top:766px;" width="10" height="9" viewBox="0 0 10 9"><path d="M1 1 H9" stroke="#000" stroke-width="1"/><path d="M0.5 3 H9.5 L5 8 Z" fill="#000"/></svg>
<div class="t" style="right:1426px;top:787px;text-align:right;">ARP Timeout:</div>
<div style="left:259px;top:785px;width:209px;height:17px;border:1px solid #a0a0a0;background:#f0f0f0;"></div>
<svg style="position:absolute;left:474px;top:790px;" width="10" height="6" viewBox="0 0 10 6"><path d="M0 0 H10 L5 5.5 Z" fill="#000"/></svg>
<div class="t" style="right:1426px;top:810px;text-align:right;">Admin. MAC Address:</div>
<div style="left:259px;top:808px;width:209px;height:17px;border:1px solid #a0a0a0;background:#f0f0f0;"></div>
<svg style="position:absolute;left:474px;top:813px;" width="10" height="6" viewBox="0 0 10 6"><path d="M0 0 H10 L5 5.5 Z" fill="#000"/></svg>
<div class="t" style="right:1426px;top:842px;text-align:right;">Ageing Time:</div>
<div style="left:259px;top:840px;width:227px;height:17px;border:1px solid #a0a0a0;background:#fff;"></div>
<div class="t" style="left:262px;top:842px;">00:05:00</div>
<div style="left:153px;top:832px;width:334px;height:1px;background:#a0a0a0;"></div>
<div style="left:153px;top:833px;width:334px;height:1px;background:#fff;"></div>
<div style="left:153px;top:863px;width:334px;height:1px;background:#a0a0a0;"></div>
<div style="left:153px;top:864px;width:334px;height:1px;background:#fff;"></div>
<div style="left:153px;top:940px;width:334px;height:1px;background:#a0a0a0;"></div>
<div style="left:153px;top:941px;width:334px;height:1px;background:#fff;"></div>
<div style="left:259px;top:873px;width:13px;height:13px;border:1px solid #333;background:#fff;"></div>
<div class="t" style="left:275px;top:872px;">IGMP Snooping</div>
<div style="left:259px;top:896px;width:13px;height:13px;border:1px solid #333;background:#fff;"></div>
<svg style="position:absolute;left:260px;top:897px;" width="11" height="11" viewBox="0 0 11 11"><path d="M2 5.5 L4.5 8 L9 2.5" fill="none" stroke="#000" stroke-width="1.8"/></svg>
<div class="t" style="left:275px;top:895px;">DHCP Snooping</div>
<div style="left:259px;top:919px;width:13px;height:13px;border:1px solid #333;background:#fff;"></div>
<div class="t" style="left:275px;top:918px;">Add DHCP Option 82</div>
<div style="left:259px;top:950px;width:13px;height:13px;border:1px solid #333;background:#fff;"></div>
<svg style="position:absolute;left:260px;top:951px;" width="11" height="11" viewBox="0 0 11 11"><path d="M2 5.5 L4.5 8 L9 2.5" fill="none" stroke="#000" stroke-width="1.8"/></svg>
<div class="t" style="left:275px;top:949px;">Fast Forward</div>
<div style="left:504px;top:595px;width:123px;height:23px;border:1px solid #000;background:#f0f0f0;border-width:2px;"></div>
<div class="t" style="left:504px;width:123px;top:599px;text-align:center;">OK</div>
<div style="left:504px;top:621px;width:123px;height:23px;border:1px solid #7a7a7a;background:#f0f0f0;box-shadow:inset 0 0 0 1px #fff;"></div>
<div class="t" style="left:504px;width:123px;top:625px;text-align:center;">Cancel</div>
<div style="left:504px;top:647px;width:123px;height:23px;border:1px solid #7a7a7a;background:#f0f0f0;box-shadow:inset 0 0 0 1px #fff;"></div>
<div class="t" style="left:504px;width:123px;top:651px;text-align:center;">Apply</div>
<div style="left:504px;top:678px;width:123px;height:23px;border:1px solid #7a7a7a;background:#f0f0f0;box-shadow:inset 0 0 0 1px #fff;"></div>
<div class="t" style="left:504px;width:123px;top:682px;text-align:center;">Disable</div>
<div style="left:504px;top:704px;width:123px;height:23px;border:1px solid #7a7a7a;background:#f0f0f0;box-shadow:inset 0 0 0 1px #fff;"></div>
<div class="t" style="left:504px;width:123px;top:708px;text-align:center;">Comment</div>
<div style="left:504px;top:730px;width:123px;height:23px;border:1px solid #7a7a7a;background:#f0f0f0;box-shadow:inset 0 0 0 1px #fff;"></div>
<div class="t" style="left:504px;width:123px;top:734px;text-align:center;">Copy</div>
<div style="left:504px;top:756px;width:123px;height:23px;border:1px solid #7a7a7a;background:#f0f0f0;box-shadow:inset 0 0 0 1px #fff;"></div>
<div class="t" style="left:504px;width:123px;top:760px;text-align:center;">Remove</div>
<div style="left:504px;top:782px;width:123px;height:23px;border:1px solid #7a7a7a;background:#f0f0f0;box-shadow:inset 0 0 0 1px #fff;"></div>
<div class="t" style="left:504px;width:123px;top:786px;text-align:center;">Torch</div>
<div style="left:504px;top:808px;width:123px;height:23px;border:1px solid #7a7a7a;background:#f0f0f0;box-shadow:inset 0 0 0 1px #fff;"></div>
<div class="t" style="left:504px;width:123px;top:812px;text-align:center;">Reset Traffic Counters</div>
<div style="left:140px;top:987px;width:1540px;height:214px;background:#000;"></div>
<div style="left:141px;top:988px;width:1538px;height:212px;background:#f0f0f0;"></div>
<div style="left:142px;top:989px;width:1536px;height:21px;background:#4f4fcc;"></div>
<div class="t" style="left:146px;top:994px;color:#fff;">Bridge</div>
<div style="left:1643px;top:992px;width:15px;height:15px;border:1px solid #333;background:#efeaef;"></div>
<svg style="position:absolute;left:1644px;top:993px;" width="13" height="13" viewBox="0 0 13 13"><rect x="2.5" y="2.5" width="8" height="8" fill="none" stroke="#222" stroke-width="1.4"/><rect x="2" y="2" width="9" height="2" fill="#222"/></svg>
<div style="left:1660px;top:992px;width:15px;height:15px;border:1px solid #333;background:#efeaef;"></div>
<svg style="position:absolute;left:1661px;top:993px;" width="13" height="13" viewBox="0 0 13 13"><path d="M3 3 L10 10 M10 3 L3 10" stroke="#222" stroke-width="2.2"/></svg>
<div style="left:144px;top:1037px;width:1534px;height:164px;background:#f0f0f0;border-top:1px solid #fff;border-left:1px solid #fff;border-right:1px solid #a0a0a0;border-bottom:1px solid #a0a0a0;"></div>
<div style="left:147px;top:1017px;width:42px;height:21px;background:#d9d9d9;border-right:1px solid #c4c4c4;"></div>
<div class="t" style="left:147px;width:42px;top:1021px;text-align:center;">Bridge</div>
<div style="left:190px;top:1013px;width:39px;height:25px;background:#f0f0f0;border-left:1px solid #fff;border-top:1px solid #fff;border-right:1px solid #a0a0a0;"></div>
<div class="t" style="left:190px;width:39px;top:1019px;text-align:center;">Ports</div>
<div style="left:230px;top:1017px;width:84px;height:21px;background:#d9d9d9;border-right:1px solid #c4c4c4;"></div>
<div class="t" style="left:230px;width:84px;top:1021px;text-align:center;">Port Extensions</div>
<div style="left:316px;top:1017px;width:46px;height:21px;background:#d9d9d9;border-right:1px solid #c4c4c4;"></div>
<div class="t" style="left:316px;width:46px;top:1021px;text-align:center;">VLANs</div>
<div style="left:363px;top:1017px;width:44px;height:21px;background:#d9d9d9;border-right:1px solid #c4c4c4;"></div>
<div class="t" style="left:363px;width:44px;top:1021px;text-align:center;">MSTIs</div>
<div style="left:408px;top:1017px;width:106px;height:21px;background:#d9d9d9;border-right:1px solid #c4c4c4;"></div>
<div class="t" style="left:408px;width:106px;top:1021px;text-align:center;">Port MST Overrides</div>
<div style="left:515px;top:1017px;width:40px;height:21px;background:#d9d9d9;border-right:1px solid #c4c4c4;"></div>
<div class="t" style="left:515px;width:40px;top:1021px;text-align:center;">Filters</div>
<div style="left:556px;top:1017px;width:35px;height:21px;background:#d9d9d9;border-right:1px solid #c4c4c4;"></div>
<div class="t" style="left:556px;width:35px;top:1021px;text-align:center;">NAT</div>
<div style="left:592px;top:1017px;width:40px;height:21px;background:#d9d9d9;border-right:1px solid #c4c4c4;"></div>
<div class="t" style="left:592px;width:40px;top:1021px;text-align:center;">Hosts</div>
<div style="left:633px;top:1017px;width:37px;height:21px;background:#d9d9d9;border-right:1px solid #c4c4c4;"></div>
<div class="t" style="left:633px;width:37px;top:1021px;text-align:center;">MDB</div>
<div style="left:145px;top:1041px;width:22px;height:23px;border:1px solid #adadad;background:#f0f0f0;box-shadow:inset 0 0 0 1px #fff;"></div>
<svg style="position:absolute;left:149px;top:1046px;" width="14" height="14" viewBox="0 0 16 16"><path d="M6 1.5 H10 V6 H14.5 V10 H10 V14.5 H6 V10 H1.5 V6 H6 Z" fill="#0000ff" stroke="#000" stroke-width="1.2"/></svg>
<div style="left:170px;top:1041px;width:22px;height:23px;border:1px solid #adadad;background:#f0f0f0;box-shadow:inset 0 0 0 1px #fff;"></div>
<svg style="position:absolute;left:174px;top:1046px;" width="14" height="14" viewBox="0 0 16 16"><rect x="2.5" y="6.5" width="11" height="3.5" fill="#f0f0f0" stroke="#a8a8a8" stroke-width="1.3"/></svg>
<div style="left:200px;top:1041px;width:22px;height:23px;border:1px solid #adadad;background:#f0f0f0;box-shadow:inset 0 0 0 1px #fff;"></div>
<svg style="position:absolute;left:204px;top:1046px;" width="14" height="14" viewBox="0 0 16 16"><path d="M2.5 8.5 L6 12 L13.5 4.5" fill="none" stroke="#a8a8a8" stroke-width="3"/><path d="M2.5 8.5 L6 12 L13.5 4.5" fill="none" stroke="#f0f0f0" stroke-width="1.2"/></svg>
<div style="left:225px;top:1041px;width:22px;height:23px;border:1px solid #adadad;background:#f0f0f0;box-shadow:inset 0 0 0 1px #fff;"></div>
<svg style="position:absolute;left:229px;top:1046px;" width="14" height="14" viewBox="0 0 16 16"><path d="M3 3 L13 13 M13 3 L3 13" fill="none" stroke="#a8a8a8" stroke-width="3.2"/><path d="M3 3 L13 13 M13 3 L3 13" fill="none" stroke="#f0f0f0" stroke-width="1.4"/></svg>
<div style="left:255px;top:1041px;width:22px;height:23px;border:1px solid #adadad;background:#f0f0f0;box-shadow:inset 0 0 0 1px #fff;"></div>
<svg style="position:absolute;left:259px;top:1046px;" width="14" height="14" viewBox="0 0 16 16"><path d="M1.5 6.5 L4.5 3.5 L14.5 3.5 L14.5 12.5 L1.5 12.5 Z" fill="#f0f0f0" stroke="#8a8a8a" stroke-width="1"/><path d="M7 6.5 H9 M10 6.5 H12 M7 8.5 H12" stroke="#8a8a8a" stroke-width="1"/></svg>
<div style="left:285px;top:1041px;width:22px;height:23px;border:1px solid #adadad;background:#f0f0f0;box-shadow:inset 0 0 0 1px #fff;"></div>
<svg style="position:absolute;left:289px;top:1046px;" width="14" height="14" viewBox="0 0 16 16"><path d="M1.5 2.5 H14.5 L9.5 8 V14.5 L6.5 13.5 V8 Z" fill="#8fa8e8" stroke="#111" stroke-width="1.2" stroke-linejoin="round"/><path d="M3.5 3.5 H12.5 L9 7 H7 Z" fill="#c8d6f8"/></svg>
<div style="left:1616px;top:1044px;width:60px;height:18px;border:1px solid #a0a0a0;background:#fff;"></div>
<div class="t" style="left:1620px;top:1046px;color:#a0a0b8;font-style:italic;">Find</div>
<div style="left:145px;top:1068px;width:1532px;height:133px;background:#fff;border-left:1px solid #a0a0a0;border-top:1px solid #a0a0a0;"></div>
<div style="left:146px;top:1069px;width:1531px;height:15px;background:#f0f0f0;"></div>
<div style="left:145px;top:1084px;width:1532px;height:1px;background:#a0a0a0;"></div>
<div style="left:169px;top:1069px;width:1px;height:15px;background:#a0a0a0;"></div>
<div style="left:170px;top:1069px;width:1px;height:15px;background:#fff;"></div>
<div style="left:203px;top:1069px;width:1px;height:15px;background:#a0a0a0;"></div>
<div style="left:204px;top:1069px;width:1px;height:15px;background:#fff;"></div>
<div style="left:303px;top:1069px;width:1px;height:15px;background:#a0a0a0;"></div>
<div style="left:304px;top:1069px;width:1px;height:15px;background:#fff;"></div>
<div style="left:418px;top:1069px;width:1px;height:15px;background:#a0a0a0;"></div>
<div style="left:419px;top:1069px;width:1px;height:15px;background:#fff;"></div>
<div style="left:463px;top:1069px;width:1px;height:15px;background:#a0a0a0;"></div>
<div style="left:464px;top:1069px;width:1px;height:15px;background:#fff;"></div>
<div style="left:520px;top:1069px;width:1px;height:15px;background:#a0a0a0;"></div>
<div style="left:521px;top:1069px;width:1px;height:15px;background:#fff;"></div>
<div style="left:580px;top:1069px;width:1px;height:15px;background:#a0a0a0;"></div>
<div style="left:581px;top:1069px;width:1px;height:15px;background:#fff;"></div>
<div style="left:640px;top:1069px;width:1px;height:15px;background:#a0a0a0;"></div>
<div style="left:641px;top:1069px;width:1px;height:15px;background:#fff;"></div>
<div style="left:680px;top:1069px;width:1px;height:15px;background:#a0a0a0;"></div>
<div style="left:681px;top:1069px;width:1px;height:15px;background:#fff;"></div>
<div style="left:780px;top:1069px;width:1px;height:15px;background:#a0a0a0;"></div>
<div style="left:781px;top:1069px;width:1px;height:15px;background:#fff;"></div>
<div style="left:893px;top:1069px;width:1px;height:15px;background:#a0a0a0;"></div>
<div style="left:894px;top:1069px;width:1px;height:15px;background:#fff;"></div>
<div style="left:1661px;top:1069px;width:1px;height:15px;background:#a0a0a0;"></div>
<div style="left:1662px;top:1069px;width:1px;height:15px;background:#fff;"></div>
<div style="left:1676px;top:1069px;width:1px;height:15px;background:#a0a0a0;"></div>
<div style="left:1677px;top:1069px;width:1px;height:15px;background:#fff;"></div>
<div style="left:1676px;top:1068px;width:1px;height:133px;background:#a0a0a0;"></div>
<svg style="position:absolute;left:1664px;top:1074px;" width="10" height="6" viewBox="0 0 10 6"><path d="M0 0 H10 L5 5.5 Z" fill="#000"/></svg>
<div class="t" style="left:152px;top:1071px;">#</div>
<div class="t" style="left:206px;top:1071px;width:97px;overflow:hidden;">Interface</div>
<div class="t" style="left:306px;top:1071px;width:112px;overflow:hidden;">Bridge</div>
<div class="t" style="left:421px;top:1071px;width:42px;overflow:hidden;">Horizon</div>
<div class="t" style="left:466px;top:1071px;width:54px;overflow:hidden;">Trusted</div>
<div class="t" style="left:523px;top:1071px;width:57px;overflow:hidden;">Priority (h...</div>
<div class="t" style="left:583px;top:1071px;width:57px;overflow:hidden;">Path Cost</div>
<div class="t" style="left:643px;top:1071px;width:37px;overflow:hidden;">PVID</div>
<div class="t" style="left:683px;top:1071px;width:97px;overflow:hidden;">Role</div>
<div class="t" style="left:783px;top:1071px;width:110px;overflow:hidden;">Root Path Cost</div>
<div style="left:146px;top:1099px;width:1531px;height:1px;background:#e3e3e3;"></div>
<div style="left:169px;top:1085px;width:1px;height:15px;background:#e3e3e3;"></div>
<div style="left:203px;top:1085px;width:1px;height:15px;background:#e3e3e3;"></div>
<div style="left:303px;top:1085px;width:1px;height:15px;background:#e3e3e3;"></div>
<div style="left:418px;top:1085px;width:1px;height:15px;background:#e3e3e3;"></div>
<div style="left:463px;top:1085px;width:1px;height:15px;background:#e3e3e3;"></div>
<div style="left:520px;top:1085px;width:1px;height:15px;background:#e3e3e3;"></div>
<div style="left:580px;top:1085px;width:1px;height:15px;background:#e3e3e3;"></div>
<div style="left:640px;top:1085px;width:1px;height:15px;background:#e3e3e3;"></div>
<div style="left:680px;top:1085px;width:1px;height:15px;background:#e3e3e3;"></div>
<div style="left:780px;top:1085px;width:1px;height:15px;background:#e3e3e3;"></div>
<div style="left:893px;top:1085px;width:1px;height:15px;background:#e3e3e3;"></div>
<div class="t" style="right:1513px;top:1085px;text-align:right;">0</div>
<svg style="position:absolute;left:206px;top:1087px;" width="12" height="10" viewBox="0 0 12 10"><circle cx="4" cy="3.2" r="2.3" fill="#3a8fd0" stroke="#3a6f9a" stroke-width="0.8"/><circle cx="8" cy="3.2" r="2.3" fill="#3a8fd0" stroke="#3a6f9a" stroke-width="0.8"/><path d="M0.4 9.6 Q0.4 5.6 4 5.6 Q6 5.6 6 7 Q6 5.6 8 5.6 Q11.6 5.6 11.6 9.6 Z" fill="#2e8ad8" stroke="#3a6f9a" stroke-width="0.8"/><path d="M6 6.4 V9.4" stroke="#6aa8d8" stroke-width="0.6"/></svg>
<div class="t" style="left:222px;top:1085px;">ether1</div>
<div class="t" style="left:306px;top:1085px;">Bridge_Central Park</div>
<div class="t" style="left:466px;top:1085px;">no</div>
<div class="t" style="right:1102px;top:1085px;text-align:right;">80</div>
<div class="t" style="right:1042px;top:1085px;text-align:right;">10</div>
<div class="t" style="right:1002px;top:1085px;text-align:right;">1</div>
<div class="t" style="left:683px;top:1085px;">root port</div>
<div class="t" style="right:789px;top:1085px;text-align:right;">22</div>
<div style="left:146px;top:1114px;width:1531px;height:1px;background:#e3e3e3;"></div>
<div style="left:169px;top:1100px;width:1px;height:15px;background:#e3e3e3;"></div>
<div style="left:203px;top:1100px;width:1px;height:15px;background:#e3e3e3;"></div>
<div style="left:303px;top:1100px;width:1px;height:15px;background:#e3e3e3;"></div>
<div style="left:418px;top:1100px;width:1px;height:15px;background:#e3e3e3;"></div>
<div style="left:463px;top:1100px;width:1px;height:15px;background:#e3e3e3;"></div>
<div style="left:520px;top:1100px;width:1px;height:15px;background:#e3e3e3;"></div>
<div style="left:580px;top:1100px;width:1px;height:15px;background:#e3e3e3;"></div>
<div style="left:640px;top:1100px;width:1px;height:15px;background:#e3e3e3;"></div>
<div style="left:680px;top:1100px;width:1px;height:15px;background:#e3e3e3;"></div>
<div style="left:780px;top:1100px;width:1px;height:15px;background:#e3e3e3;"></div>
<div style="left:893px;top:1100px;width:1px;height:15px;background:#e3e3e3;"></div>
<div class="t" style="right:1513px;top:1100px;text-align:right;">1</div>
<svg style="position:absolute;left:206px;top:1102px;" width="12" height="10" viewBox="0 0 12 10"><circle cx="4" cy="3.2" r="2.3" fill="#3a8fd0" stroke="#3a6f9a" stroke-width="0.8"/><circle cx="8" cy="3.2" r="2.3" fill="#3a8fd0" stroke="#3a6f9a" stroke-width="0.8"/><path d="M0.4 9.6 Q0.4 5.6 4 5.6 Q6 5.6 6 7 Q6 5.6 8 5.6 Q11.6 5.6 11.6 9.6 Z" fill="#2e8ad8" stroke="#3a6f9a" stroke-width="0.8"/><path d="M6 6.4 V9.4" stroke="#6aa8d8" stroke-width="0.6"/></svg>
<div class="t" style="left:222px;top:1100px;">ether2</div>
<div class="t" style="left:306px;top:1100px;">Bridge_Central Park</div>
<div class="t" style="left:466px;top:1100px;">no</div>
<div class="t" style="right:1102px;top:1100px;text-align:right;">80</div>
<div class="t" style="right:1042px;top:1100px;text-align:right;">10</div>
<div class="t" style="right:1002px;top:1100px;text-align:right;">1</div>
<div class="t" style="left:683px;top:1100px;">designated port</div>
<div style="left:146px;top:1085px;width:1531px;height:14px;border:1px dotted #555;border-top:none;"></div>

<div style="left:1121px;top:297px;width:89px;height:191px;border:5px solid #ed1c24;"></div></body></html>
